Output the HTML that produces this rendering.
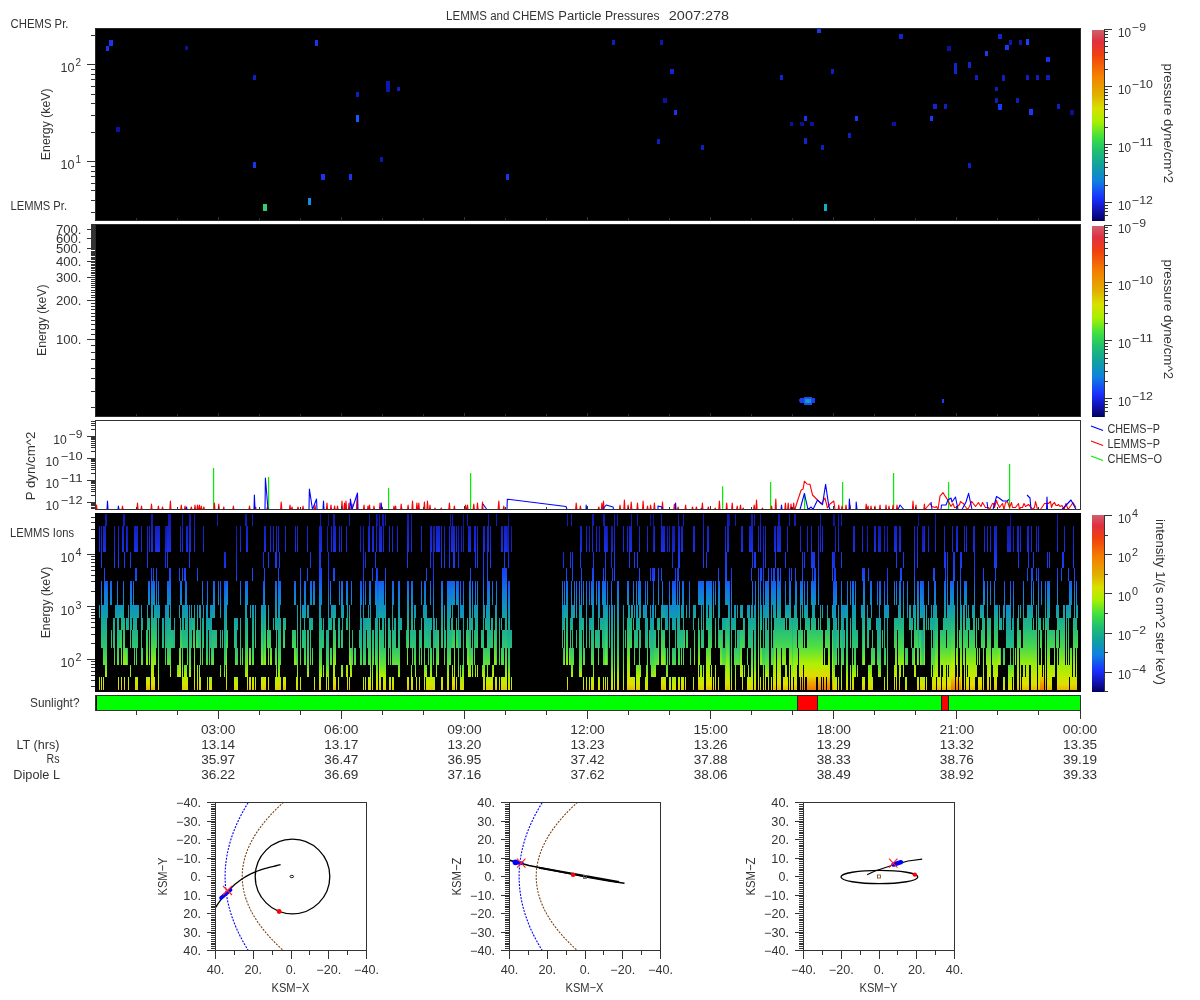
<!DOCTYPE html>
<html><head><meta charset="utf-8"><title>LEMMS and CHEMS Particle Pressures 2007:278</title>
<style>html,body{margin:0;padding:0;background:#fff;}body{width:1200px;height:1000px;overflow:hidden;font-family:"Liberation Sans", sans-serif;}svg{display:block;will-change:transform;}</style>
</head><body>
<svg width="1200" height="1000" viewBox="0 0 1200 1000" font-family='"Liberation Sans", sans-serif'><defs><linearGradient id="cmap" x1="0" y1="0" x2="0" y2="1"><stop offset="0.0" stop-color="#d0606c"/><stop offset="0.06" stop-color="#e03040"/><stop offset="0.13" stop-color="#f04010"/><stop offset="0.24" stop-color="#f58000"/><stop offset="0.34" stop-color="#e0b000"/><stop offset="0.41" stop-color="#d8e000"/><stop offset="0.48" stop-color="#a8f000"/><stop offset="0.56" stop-color="#40e040"/><stop offset="0.63" stop-color="#20c070"/><stop offset="0.71" stop-color="#10a0a0"/><stop offset="0.79" stop-color="#1080e0"/><stop offset="0.88" stop-color="#1a30ff"/><stop offset="0.95" stop-color="#1010a8"/><stop offset="1.0" stop-color="#000060"/></linearGradient><linearGradient id="gc" gradientUnits="userSpaceOnUse" x1="0" y1="513" x2="0" y2="691"><stop offset="0.000" stop-color="#080a80"/><stop offset="0.073" stop-color="#1216a8"/><stop offset="0.219" stop-color="#1728d4"/><stop offset="0.348" stop-color="#1a38f8"/><stop offset="0.433" stop-color="#1464e9"/><stop offset="0.517" stop-color="#1088d2"/><stop offset="0.590" stop-color="#109caf"/><stop offset="0.657" stop-color="#17aa99"/><stop offset="0.753" stop-color="#25bc7e"/><stop offset="0.848" stop-color="#4adb48"/><stop offset="0.916" stop-color="#98ec10"/><stop offset="0.961" stop-color="#c5e900"/><stop offset="0.994" stop-color="#e1d900"/></linearGradient><linearGradient id="gn" gradientUnits="userSpaceOnUse" x1="0" y1="513" x2="0" y2="691"><stop offset="0.000" stop-color="#1013a0"/><stop offset="0.073" stop-color="#151fbf"/><stop offset="0.219" stop-color="#1931e9"/><stop offset="0.348" stop-color="#1848f3"/><stop offset="0.433" stop-color="#1274e4"/><stop offset="0.517" stop-color="#1090c4"/><stop offset="0.590" stop-color="#13a4a2"/><stop offset="0.657" stop-color="#1db28d"/><stop offset="0.753" stop-color="#2ec570"/><stop offset="0.848" stop-color="#5ce238"/><stop offset="0.916" stop-color="#b0f000"/><stop offset="0.961" stop-color="#d2e500"/><stop offset="0.994" stop-color="#e3cb00"/></linearGradient><linearGradient id="gw" gradientUnits="userSpaceOnUse" x1="0" y1="513" x2="0" y2="691"><stop offset="0.000" stop-color="#1013a0"/><stop offset="0.073" stop-color="#151fbf"/><stop offset="0.219" stop-color="#1931e9"/><stop offset="0.348" stop-color="#1848f3"/><stop offset="0.433" stop-color="#1178e3"/><stop offset="0.517" stop-color="#1094bd"/><stop offset="0.590" stop-color="#19ac96"/><stop offset="0.657" stop-color="#26be7b"/><stop offset="0.753" stop-color="#47d94c"/><stop offset="0.848" stop-color="#98ec10"/><stop offset="0.916" stop-color="#c5e900"/><stop offset="0.961" stop-color="#e0e000"/><stop offset="0.994" stop-color="#e7b700"/></linearGradient><linearGradient id="gh" gradientUnits="userSpaceOnUse" x1="0" y1="513" x2="0" y2="691"><stop offset="0.000" stop-color="#1013a0"/><stop offset="0.073" stop-color="#151fbf"/><stop offset="0.219" stop-color="#1931e9"/><stop offset="0.348" stop-color="#1848f3"/><stop offset="0.433" stop-color="#1178e3"/><stop offset="0.517" stop-color="#1094bd"/><stop offset="0.590" stop-color="#19ac96"/><stop offset="0.657" stop-color="#2bc274"/><stop offset="0.753" stop-color="#50e040"/><stop offset="0.848" stop-color="#b0f000"/><stop offset="0.916" stop-color="#e1d900"/><stop offset="0.961" stop-color="#ed9d00"/><stop offset="0.994" stop-color="#f47403"/></linearGradient></defs><text x="446.09999999999997" y="20" font-size="12.5" text-anchor="start" fill="#333" textLength="108.1" lengthAdjust="spacingAndGlyphs" xml:space="preserve">LEMMS and CHEMS</text><text x="558.3" y="20" font-size="12.5" text-anchor="start" fill="#333" textLength="43.3" lengthAdjust="spacingAndGlyphs" xml:space="preserve">Particle</text><text x="605.0" y="20" font-size="12.5" text-anchor="start" fill="#333" textLength="54.7" lengthAdjust="spacingAndGlyphs" xml:space="preserve">Pressures</text><text x="668.8" y="20" font-size="12.5" text-anchor="start" fill="#333" textLength="60.3" lengthAdjust="spacingAndGlyphs" xml:space="preserve">2007:278</text><rect x="95" y="28" width="986" height="193" fill="#000"/><rect x="95.5" y="28.5" width="985" height="192" fill="none" stroke="#2a2a2a" stroke-width="1"/><rect x="109" y="40" width="4" height="6" fill="#1a34f0"/><rect x="106" y="46" width="3" height="5" fill="#1a34f0"/><rect x="185" y="46" width="3" height="4" fill="#0a12a0"/><rect x="315" y="40" width="3" height="6" fill="#1a34f0"/><rect x="253" y="75" width="3" height="5" fill="#0e20c0"/><rect x="116" y="127" width="4" height="5" fill="#0a12a0"/><rect x="253" y="162" width="3" height="6" fill="#1a34f0"/><rect x="321" y="174" width="4" height="6" fill="#1a34f0"/><rect x="308" y="198" width="3" height="7" fill="#0c90e0"/><rect x="263" y="204" width="4" height="7" fill="#30d070"/><rect x="356" y="92" width="3" height="5" fill="#0e20c0"/><rect x="386" y="81" width="4" height="11" fill="#0a18b0"/><rect x="397" y="87" width="3" height="4" fill="#0e20c0"/><rect x="356" y="115" width="3" height="7" fill="#1a58ff"/><rect x="380" y="157" width="3" height="5" fill="#0a18b0"/><rect x="349" y="174" width="3" height="6" fill="#1a34f0"/><rect x="506" y="174" width="3" height="6" fill="#1a34f0"/><rect x="612" y="40" width="3" height="5" fill="#0e20c0"/><rect x="660" y="40" width="3" height="5" fill="#0a18b0"/><rect x="817" y="29" width="4" height="4" fill="#1a34f0"/><rect x="670" y="69" width="4" height="5" fill="#1224d0"/><rect x="780" y="75" width="3" height="5" fill="#1224d0"/><rect x="831" y="69" width="3" height="5" fill="#0e20c0"/><rect x="663" y="98" width="4" height="5" fill="#0a12a0"/><rect x="674" y="110" width="3" height="5" fill="#1a34f0"/><rect x="804" y="116" width="3" height="5" fill="#1a34f0"/><rect x="790" y="122" width="3" height="4" fill="#0a12a0"/><rect x="800" y="122" width="4" height="4" fill="#0a1090"/><rect x="810" y="122" width="4" height="4" fill="#0a12a0"/><rect x="657" y="139" width="3" height="5" fill="#0e20c0"/><rect x="804" y="138" width="3" height="6" fill="#1224d0"/><rect x="701" y="145" width="3" height="5" fill="#0e20c0"/><rect x="821" y="145" width="3" height="5" fill="#0e20c0"/><rect x="824" y="204" width="3" height="7" fill="#10b0c0"/><rect x="899" y="34" width="4" height="5" fill="#1224d0"/><rect x="998" y="34" width="4" height="5" fill="#1224d0"/><rect x="1009" y="40" width="3" height="5" fill="#0a18b0"/><rect x="1019" y="40" width="3" height="5" fill="#0a18b0"/><rect x="1026" y="39" width="3" height="6" fill="#1a44ff"/><rect x="1005" y="45" width="4" height="5" fill="#1a38f8"/><rect x="947" y="46" width="4" height="5" fill="#0a12a0"/><rect x="985" y="51" width="3" height="5" fill="#1a38f8"/><rect x="1046" y="57" width="4" height="5" fill="#1630f0"/><rect x="954" y="63" width="3" height="11" fill="#1224d0"/><rect x="968" y="62" width="3" height="6" fill="#1224d0"/><rect x="975" y="75" width="3" height="5" fill="#0e20c0"/><rect x="1002" y="75" width="3" height="6" fill="#0e20c0"/><rect x="1026" y="75" width="3" height="5" fill="#0e20c0"/><rect x="1036" y="75" width="3" height="5" fill="#0e20c0"/><rect x="1046" y="75" width="4" height="5" fill="#0e1eb8"/><rect x="995" y="87" width="3" height="4" fill="#0e1eb8"/><rect x="995" y="98" width="3" height="5" fill="#0e1eb8"/><rect x="1016" y="98" width="3" height="5" fill="#0e1eb8"/><rect x="933" y="104" width="4" height="5" fill="#1224d0"/><rect x="944" y="104" width="3" height="5" fill="#0e20c0"/><rect x="998" y="104" width="4" height="6" fill="#1a38f8"/><rect x="1057" y="104" width="3" height="5" fill="#0e20c0"/><rect x="1029" y="109" width="4" height="6" fill="#1a38f8"/><rect x="1070" y="110" width="4" height="5" fill="#0a1090"/><rect x="855" y="116" width="3" height="5" fill="#1a38f8"/><rect x="930" y="116" width="3" height="5" fill="#1a38f8"/><rect x="892" y="122" width="4" height="4" fill="#0a12a0"/><rect x="848" y="133" width="3" height="5" fill="#0e20c0"/><rect x="968" y="163" width="3" height="5" fill="#0e20c0"/><rect x="91" y="212" width="4" height="1" fill="#333"/><rect x="91" y="200" width="4" height="1" fill="#333"/><rect x="91" y="190" width="4" height="1" fill="#333"/><rect x="91" y="183" width="4" height="1" fill="#333"/><rect x="91" y="176" width="4" height="1" fill="#333"/><rect x="91" y="171" width="4" height="1" fill="#333"/><rect x="91" y="166" width="4" height="1" fill="#333"/><rect x="87" y="161" width="8" height="1" fill="#333"/><rect x="91" y="132" width="4" height="1" fill="#333"/><rect x="91" y="115" width="4" height="1" fill="#333"/><rect x="91" y="103" width="4" height="1" fill="#333"/><rect x="91" y="94" width="4" height="1" fill="#333"/><rect x="91" y="86" width="4" height="1" fill="#333"/><rect x="91" y="79" width="4" height="1" fill="#333"/><rect x="91" y="74" width="4" height="1" fill="#333"/><rect x="91" y="69" width="4" height="1" fill="#333"/><rect x="87" y="64" width="8" height="1" fill="#333"/><rect x="91" y="35" width="4" height="1" fill="#333"/><rect x="136" y="218" width="1" height="2" fill="#333"/><rect x="177" y="218" width="1" height="2" fill="#333"/><rect x="218" y="217" width="1" height="3" fill="#333"/><rect x="259" y="218" width="1" height="2" fill="#333"/><rect x="300" y="218" width="1" height="2" fill="#333"/><rect x="341" y="217" width="1" height="3" fill="#333"/><rect x="382" y="218" width="1" height="2" fill="#333"/><rect x="423" y="218" width="1" height="2" fill="#333"/><rect x="464" y="217" width="1" height="3" fill="#333"/><rect x="505" y="218" width="1" height="2" fill="#333"/><rect x="546" y="218" width="1" height="2" fill="#333"/><rect x="587" y="217" width="1" height="3" fill="#333"/><rect x="628" y="218" width="1" height="2" fill="#333"/><rect x="669" y="218" width="1" height="2" fill="#333"/><rect x="710" y="217" width="1" height="3" fill="#333"/><rect x="751" y="218" width="1" height="2" fill="#333"/><rect x="792" y="218" width="1" height="2" fill="#333"/><rect x="833" y="217" width="1" height="3" fill="#333"/><rect x="874" y="218" width="1" height="2" fill="#333"/><rect x="915" y="218" width="1" height="2" fill="#333"/><rect x="956" y="217" width="1" height="3" fill="#333"/><rect x="997" y="218" width="1" height="2" fill="#333"/><rect x="1038" y="218" width="1" height="2" fill="#333"/><text x="60.5" y="72" font-size="12.5" text-anchor="start" fill="#333" textLength="14" lengthAdjust="spacingAndGlyphs" xml:space="preserve">10</text><text x="75.5" y="66" font-size="11" text-anchor="start" fill="#333" textLength="5.5" lengthAdjust="spacingAndGlyphs" xml:space="preserve">2</text><text x="60.5" y="168.5" font-size="12.5" text-anchor="start" fill="#333" textLength="14" lengthAdjust="spacingAndGlyphs" xml:space="preserve">10</text><text x="75.5" y="162.5" font-size="11" text-anchor="start" fill="#333" textLength="5.5" lengthAdjust="spacingAndGlyphs" xml:space="preserve">1</text><text x="10.5" y="28" font-size="12.5" text-anchor="start" fill="#333" textLength="58" lengthAdjust="spacingAndGlyphs" xml:space="preserve">CHEMS Pr.</text><text transform="translate(50,124.3) rotate(-90)" font-size="12.5" text-anchor="middle" fill="#333" textLength="71.7" lengthAdjust="spacingAndGlyphs">Energy (keV)</text><rect x="1092" y="30" width="12" height="191" fill="url(#cmap)"/><rect x="1104" y="30" width="1" height="191" fill="#333"/><rect x="1104" y="215" width="4" height="1" fill="#333"/><rect x="1104" y="211" width="4" height="1" fill="#333"/><rect x="1104" y="208" width="4" height="1" fill="#333"/><rect x="1104" y="205" width="4" height="1" fill="#333"/><rect x="1104" y="202" width="8" height="1" fill="#333"/><rect x="1104" y="185" width="4" height="1" fill="#333"/><rect x="1104" y="175" width="4" height="1" fill="#333"/><rect x="1104" y="167" width="4" height="1" fill="#333"/><rect x="1104" y="162" width="4" height="1" fill="#333"/><rect x="1104" y="157" width="4" height="1" fill="#333"/><rect x="1104" y="153" width="4" height="1" fill="#333"/><rect x="1104" y="150" width="4" height="1" fill="#333"/><rect x="1104" y="147" width="4" height="1" fill="#333"/><rect x="1104" y="144" width="8" height="1" fill="#333"/><rect x="1104" y="127" width="4" height="1" fill="#333"/><rect x="1104" y="117" width="4" height="1" fill="#333"/><rect x="1104" y="109" width="4" height="1" fill="#333"/><rect x="1104" y="104" width="4" height="1" fill="#333"/><rect x="1104" y="99" width="4" height="1" fill="#333"/><rect x="1104" y="95" width="4" height="1" fill="#333"/><rect x="1104" y="92" width="4" height="1" fill="#333"/><rect x="1104" y="89" width="4" height="1" fill="#333"/><rect x="1104" y="86" width="8" height="1" fill="#333"/><rect x="1104" y="69" width="4" height="1" fill="#333"/><rect x="1104" y="59" width="4" height="1" fill="#333"/><rect x="1104" y="52" width="4" height="1" fill="#333"/><rect x="1104" y="46" width="4" height="1" fill="#333"/><rect x="1104" y="41" width="4" height="1" fill="#333"/><rect x="1104" y="37" width="4" height="1" fill="#333"/><rect x="1104" y="34" width="4" height="1" fill="#333"/><rect x="1104" y="31" width="4" height="1" fill="#333"/><rect x="1104" y="29" width="8" height="1" fill="#333"/><text x="1118" y="36.5" font-size="12.5" text-anchor="start" fill="#333" textLength="13" lengthAdjust="spacingAndGlyphs" xml:space="preserve">10</text><text x="1132" y="30.5" font-size="11.5" text-anchor="start" fill="#333" textLength="14" lengthAdjust="spacingAndGlyphs" xml:space="preserve">−9</text><text x="1118" y="94.3" font-size="12.5" text-anchor="start" fill="#333" textLength="13" lengthAdjust="spacingAndGlyphs" xml:space="preserve">10</text><text x="1132" y="88.3" font-size="11.5" text-anchor="start" fill="#333" textLength="21" lengthAdjust="spacingAndGlyphs" xml:space="preserve">−10</text><text x="1118" y="152.1" font-size="12.5" text-anchor="start" fill="#333" textLength="13" lengthAdjust="spacingAndGlyphs" xml:space="preserve">10</text><text x="1132" y="146.1" font-size="11.5" text-anchor="start" fill="#333" textLength="21" lengthAdjust="spacingAndGlyphs" xml:space="preserve">−11</text><text x="1118" y="209.9" font-size="12.5" text-anchor="start" fill="#333" textLength="13" lengthAdjust="spacingAndGlyphs" xml:space="preserve">10</text><text x="1132" y="203.9" font-size="11.5" text-anchor="start" fill="#333" textLength="21" lengthAdjust="spacingAndGlyphs" xml:space="preserve">−12</text><text transform="translate(1164,123.3) rotate(90)" font-size="12.5" text-anchor="middle" fill="#333" textLength="119.7" lengthAdjust="spacingAndGlyphs">pressure dyne/cm^2</text><rect x="95" y="224" width="986" height="193" fill="#000"/><rect x="95.5" y="224.5" width="985" height="192" fill="none" stroke="#2a2a2a" stroke-width="1"/><rect x="800" y="398" width="15" height="5" fill="#1a40f0"/><rect x="799" y="399" width="1" height="3" fill="#1530d0"/><rect x="804" y="397" width="8" height="8" fill="#1a50f0"/><rect x="805" y="399" width="6" height="4" fill="#1890d8"/><rect x="806" y="400" width="3" height="2" fill="#10a0c0"/><rect x="942" y="399" width="2" height="4" fill="#1a40ff"/><rect x="91" y="407" width="4" height="1" fill="#333"/><rect x="91" y="391" width="4" height="1" fill="#333"/><rect x="91" y="378" width="4" height="1" fill="#333"/><rect x="91" y="368" width="4" height="1" fill="#333"/><rect x="91" y="359" width="4" height="1" fill="#333"/><rect x="91" y="352" width="4" height="1" fill="#333"/><rect x="91" y="345" width="4" height="1" fill="#333"/><rect x="87" y="339" width="8" height="1" fill="#333"/><rect x="91" y="334" width="4" height="1" fill="#333"/><rect x="91" y="329" width="4" height="1" fill="#333"/><rect x="91" y="324" width="4" height="1" fill="#333"/><rect x="91" y="320" width="4" height="1" fill="#333"/><rect x="91" y="316" width="4" height="1" fill="#333"/><rect x="91" y="313" width="4" height="1" fill="#333"/><rect x="91" y="309" width="4" height="1" fill="#333"/><rect x="91" y="306" width="4" height="1" fill="#333"/><rect x="91" y="303" width="4" height="1" fill="#333"/><rect x="87" y="300" width="8" height="1" fill="#333"/><rect x="91" y="297" width="4" height="1" fill="#333"/><rect x="91" y="295" width="4" height="1" fill="#333"/><rect x="91" y="292" width="4" height="1" fill="#333"/><rect x="91" y="290" width="4" height="1" fill="#333"/><rect x="91" y="287" width="4" height="1" fill="#333"/><rect x="91" y="285" width="4" height="1" fill="#333"/><rect x="91" y="283" width="4" height="1" fill="#333"/><rect x="91" y="281" width="4" height="1" fill="#333"/><rect x="91" y="279" width="4" height="1" fill="#333"/><rect x="87" y="277" width="8" height="1" fill="#333"/><rect x="91" y="275" width="4" height="1" fill="#333"/><rect x="91" y="273" width="4" height="1" fill="#333"/><rect x="91" y="272" width="4" height="1" fill="#333"/><rect x="91" y="270" width="4" height="1" fill="#333"/><rect x="91" y="268" width="4" height="1" fill="#333"/><rect x="91" y="267" width="4" height="1" fill="#333"/><rect x="91" y="265" width="4" height="1" fill="#333"/><rect x="91" y="264" width="4" height="1" fill="#333"/><rect x="91" y="262" width="4" height="1" fill="#333"/><rect x="87" y="261" width="8" height="1" fill="#333"/><rect x="91" y="259" width="4" height="1" fill="#333"/><rect x="91" y="258" width="4" height="1" fill="#333"/><rect x="91" y="257" width="4" height="1" fill="#333"/><rect x="91" y="255" width="4" height="1" fill="#333"/><rect x="91" y="254" width="4" height="1" fill="#333"/><rect x="91" y="253" width="4" height="1" fill="#333"/><rect x="91" y="252" width="4" height="1" fill="#333"/><rect x="91" y="251" width="4" height="1" fill="#333"/><rect x="91" y="249" width="4" height="1" fill="#333"/><rect x="87" y="248" width="8" height="1" fill="#333"/><rect x="91" y="247" width="4" height="1" fill="#333"/><rect x="91" y="246" width="4" height="1" fill="#333"/><rect x="91" y="245" width="4" height="1" fill="#333"/><rect x="91" y="244" width="4" height="1" fill="#333"/><rect x="91" y="243" width="4" height="1" fill="#333"/><rect x="91" y="242" width="4" height="1" fill="#333"/><rect x="91" y="241" width="4" height="1" fill="#333"/><rect x="91" y="240" width="4" height="1" fill="#333"/><rect x="91" y="239" width="4" height="1" fill="#333"/><rect x="87" y="238" width="8" height="1" fill="#333"/><rect x="91" y="237" width="4" height="1" fill="#333"/><rect x="91" y="236" width="4" height="1" fill="#333"/><rect x="91" y="235" width="4" height="1" fill="#333"/><rect x="91" y="234" width="4" height="1" fill="#333"/><rect x="91" y="233" width="4" height="1" fill="#333"/><rect x="91" y="233" width="4" height="1" fill="#333"/><rect x="91" y="232" width="4" height="1" fill="#333"/><rect x="91" y="231" width="4" height="1" fill="#333"/><rect x="91" y="230" width="4" height="1" fill="#333"/><rect x="87" y="229" width="8" height="1" fill="#333"/><rect x="91" y="228" width="4" height="1" fill="#333"/><rect x="91" y="228" width="4" height="1" fill="#333"/><rect x="91" y="227" width="4" height="1" fill="#333"/><rect x="91" y="226" width="4" height="1" fill="#333"/><rect x="91" y="225" width="4" height="1" fill="#333"/><rect x="91" y="225" width="4" height="1" fill="#333"/><rect x="91" y="224" width="4" height="1" fill="#333"/><text x="81.5" y="344.14000000000004" font-size="12" text-anchor="end" fill="#333" textLength="25.5" lengthAdjust="spacingAndGlyphs" xml:space="preserve">100.</text><text x="81.5" y="304.99706966381257" font-size="12" text-anchor="end" fill="#333" textLength="25.5" lengthAdjust="spacingAndGlyphs" xml:space="preserve">200.</text><text x="81.5" y="282.0999232488023" font-size="12" text-anchor="end" fill="#333" textLength="25.5" lengthAdjust="spacingAndGlyphs" xml:space="preserve">300.</text><text x="81.5" y="265.8541393276251" font-size="12" text-anchor="end" fill="#333" textLength="25.5" lengthAdjust="spacingAndGlyphs" xml:space="preserve">400.</text><text x="81.5" y="253.25293033618755" font-size="12" text-anchor="end" fill="#333" textLength="25.5" lengthAdjust="spacingAndGlyphs" xml:space="preserve">500.</text><text x="81.5" y="242.9569929126149" font-size="12" text-anchor="end" fill="#333" textLength="25.5" lengthAdjust="spacingAndGlyphs" xml:space="preserve">600.</text><text x="81.5" y="234.25190185694623" font-size="12" text-anchor="end" fill="#333" textLength="25.5" lengthAdjust="spacingAndGlyphs" xml:space="preserve">700.</text><rect x="136" y="414" width="1" height="2" fill="#333"/><rect x="177" y="414" width="1" height="2" fill="#333"/><rect x="218" y="413" width="1" height="3" fill="#333"/><rect x="259" y="414" width="1" height="2" fill="#333"/><rect x="300" y="414" width="1" height="2" fill="#333"/><rect x="341" y="413" width="1" height="3" fill="#333"/><rect x="382" y="414" width="1" height="2" fill="#333"/><rect x="423" y="414" width="1" height="2" fill="#333"/><rect x="464" y="413" width="1" height="3" fill="#333"/><rect x="505" y="414" width="1" height="2" fill="#333"/><rect x="546" y="414" width="1" height="2" fill="#333"/><rect x="587" y="413" width="1" height="3" fill="#333"/><rect x="628" y="414" width="1" height="2" fill="#333"/><rect x="669" y="414" width="1" height="2" fill="#333"/><rect x="710" y="413" width="1" height="3" fill="#333"/><rect x="751" y="414" width="1" height="2" fill="#333"/><rect x="792" y="414" width="1" height="2" fill="#333"/><rect x="833" y="413" width="1" height="3" fill="#333"/><rect x="874" y="414" width="1" height="2" fill="#333"/><rect x="915" y="414" width="1" height="2" fill="#333"/><rect x="956" y="413" width="1" height="3" fill="#333"/><rect x="997" y="414" width="1" height="2" fill="#333"/><rect x="1038" y="414" width="1" height="2" fill="#333"/><text x="10.5" y="209.5" font-size="12.5" text-anchor="start" fill="#333" textLength="56.5" lengthAdjust="spacingAndGlyphs" xml:space="preserve">LEMMS Pr.</text><text transform="translate(46,320.25) rotate(-90)" font-size="12.5" text-anchor="middle" fill="#333" textLength="71.5" lengthAdjust="spacingAndGlyphs">Energy (keV)</text><rect x="1092" y="226" width="12" height="191" fill="url(#cmap)"/><rect x="1104" y="226" width="1" height="191" fill="#333"/><rect x="1104" y="411" width="4" height="1" fill="#333"/><rect x="1104" y="407" width="4" height="1" fill="#333"/><rect x="1104" y="404" width="4" height="1" fill="#333"/><rect x="1104" y="401" width="4" height="1" fill="#333"/><rect x="1104" y="398" width="8" height="1" fill="#333"/><rect x="1104" y="381" width="4" height="1" fill="#333"/><rect x="1104" y="371" width="4" height="1" fill="#333"/><rect x="1104" y="363" width="4" height="1" fill="#333"/><rect x="1104" y="358" width="4" height="1" fill="#333"/><rect x="1104" y="353" width="4" height="1" fill="#333"/><rect x="1104" y="349" width="4" height="1" fill="#333"/><rect x="1104" y="346" width="4" height="1" fill="#333"/><rect x="1104" y="343" width="4" height="1" fill="#333"/><rect x="1104" y="340" width="8" height="1" fill="#333"/><rect x="1104" y="323" width="4" height="1" fill="#333"/><rect x="1104" y="313" width="4" height="1" fill="#333"/><rect x="1104" y="305" width="4" height="1" fill="#333"/><rect x="1104" y="300" width="4" height="1" fill="#333"/><rect x="1104" y="295" width="4" height="1" fill="#333"/><rect x="1104" y="291" width="4" height="1" fill="#333"/><rect x="1104" y="288" width="4" height="1" fill="#333"/><rect x="1104" y="285" width="4" height="1" fill="#333"/><rect x="1104" y="282" width="8" height="1" fill="#333"/><rect x="1104" y="265" width="4" height="1" fill="#333"/><rect x="1104" y="255" width="4" height="1" fill="#333"/><rect x="1104" y="248" width="4" height="1" fill="#333"/><rect x="1104" y="242" width="4" height="1" fill="#333"/><rect x="1104" y="237" width="4" height="1" fill="#333"/><rect x="1104" y="233" width="4" height="1" fill="#333"/><rect x="1104" y="230" width="4" height="1" fill="#333"/><rect x="1104" y="227" width="4" height="1" fill="#333"/><rect x="1104" y="225" width="8" height="1" fill="#333"/><text x="1118" y="232.5" font-size="12.5" text-anchor="start" fill="#333" textLength="13" lengthAdjust="spacingAndGlyphs" xml:space="preserve">10</text><text x="1132" y="226.5" font-size="11.5" text-anchor="start" fill="#333" textLength="14" lengthAdjust="spacingAndGlyphs" xml:space="preserve">−9</text><text x="1118" y="290.3" font-size="12.5" text-anchor="start" fill="#333" textLength="13" lengthAdjust="spacingAndGlyphs" xml:space="preserve">10</text><text x="1132" y="284.3" font-size="11.5" text-anchor="start" fill="#333" textLength="21" lengthAdjust="spacingAndGlyphs" xml:space="preserve">−10</text><text x="1118" y="348.1" font-size="12.5" text-anchor="start" fill="#333" textLength="13" lengthAdjust="spacingAndGlyphs" xml:space="preserve">10</text><text x="1132" y="342.1" font-size="11.5" text-anchor="start" fill="#333" textLength="21" lengthAdjust="spacingAndGlyphs" xml:space="preserve">−11</text><text x="1118" y="405.9" font-size="12.5" text-anchor="start" fill="#333" textLength="13" lengthAdjust="spacingAndGlyphs" xml:space="preserve">10</text><text x="1132" y="399.9" font-size="11.5" text-anchor="start" fill="#333" textLength="21" lengthAdjust="spacingAndGlyphs" xml:space="preserve">−12</text><text transform="translate(1164,319.3) rotate(90)" font-size="12.5" text-anchor="middle" fill="#333" textLength="119.7" lengthAdjust="spacingAndGlyphs">pressure dyne/cm^2</text><rect x="95.5" y="420.5" width="985" height="89" fill="#fff" stroke="#333" stroke-width="1"/><rect x="213" y="468" width="1.2" height="41.5" fill="#00ee00"/><rect x="268" y="477" width="1.2" height="32.5" fill="#00ee00"/><rect x="388" y="488" width="1.2" height="21.5" fill="#00ee00"/><rect x="470" y="473" width="1.2" height="36.5" fill="#00ee00"/><rect x="722" y="486.3" width="1.2" height="23.19999999999999" fill="#00ee00"/><rect x="770" y="482" width="1.2" height="27.5" fill="#00ee00"/><rect x="804" y="493.3" width="1.2" height="16.19999999999999" fill="#00ee00"/><rect x="842" y="482" width="1.2" height="27.5" fill="#00ee00"/><rect x="893" y="473" width="1.2" height="36.5" fill="#00ee00"/><rect x="948" y="482" width="1.2" height="27.5" fill="#00ee00"/><rect x="1009" y="464" width="1.2" height="45.5" fill="#00ee00"/><path d="M95.9 509.5 L96.5 505.0 L97.1 509.5 L121.9 509.5 L122.5 506.0 L123.1 509.5 L136.9 509.5 L137.5 503.0 L138.1 509.5 L140.9 509.5 L141.5 506.0 L142.1 509.5 L150.9 509.5 L151.5 504.0 L152.1 509.5 L157.8 509.5 L158.4 506.0 L159.0 509.5 L161.9 509.5 L162.5 507.0 L163.1 509.5 L169.8 509.5 L170.4 501.0 L171.0 509.5 L180.7 509.5 L181.3 505.0 L181.9 509.5 L184.4 509.5 L185.0 506.0 L185.6 509.5 L190.7 509.5 L191.3 507.0 L191.9 509.5 L194.4 509.5 L195.0 505.0 L195.6 509.5 L196.9 509.5 L197.5 505.0 L198.1 509.5 L198.8 509.5 L199.4 505.0 L200.0 509.5 L200.7 509.5 L201.3 506.0 L201.9 509.5 L203.2 509.5 L203.8 507.0 L204.4 509.5 L213.8 509.5 L214.4 503.0 L215.0 509.5 L218.2 509.5 L218.8 504.0 L219.3 509.5 L223.2 509.5 L223.8 507.0 L224.3 509.5 L232.8 509.5 L233.4 506.0 L234.0 509.5 L248.9 509.5 L249.5 506.0 L250.1 509.5 L255.0 509.5 L255.6 507.0 L256.2 509.5 L266.9 509.5 L267.5 507.0 L268.1 509.5 L280.6 509.5 L281.2 502.0 L281.9 509.5 L289.4 509.5 L290.0 505.0 L290.6 509.5 L291.4 509.5 L292.0 507.0 L292.6 509.5 L297.4 509.5 L298.0 507.0 L298.6 509.5 L302.4 509.5 L303.0 506.0 L303.6 509.5 L314.4 509.5 L315.0 505.0 L315.6 509.5 L326.4 509.5 L327.0 503.0 L327.6 509.5 L330.4 509.5 L331.0 505.0 L331.6 509.5 L334.0 509.5 L334.6 506.0 L335.2 509.5 L336.9 509.5 L337.5 506.0 L338.1 509.5 L341.4 509.5 L342.0 501.0 L342.6 509.5 L343.9 509.5 L344.5 503.0 L345.1 509.5 L345.4 509.5 L346.0 501.0 L346.6 509.5 L348.4 509.5 L349.0 503.0 L349.6 509.5 L351.4 509.5 L352.0 504.0 L352.6 509.5 L356.4 509.5 L357.0 497.0 L357.6 509.5 L363.4 509.5 L364.0 505.0 L364.6 509.5 L367.4 509.5 L368.0 506.0 L368.6 509.5 L368.9 509.5 L369.5 505.0 L370.1 509.5 L373.4 509.5 L374.0 506.0 L374.6 509.5 L379.4 509.5 L380.0 503.0 L380.6 509.5 L393.4 509.5 L394.0 506.0 L394.6 509.5 L395.0 509.5 L395.6 506.0 L396.2 509.5 L400.6 509.5 L401.2 504.0 L401.9 509.5 L407.5 509.5 L408.1 505.0 L408.7 509.5 L411.9 509.5 L412.5 501.0 L413.1 509.5 L416.3 509.5 L416.9 503.0 L417.5 509.5 L418.1 509.5 L418.8 503.0 L419.4 509.5 L423.8 509.5 L424.4 502.0 L425.0 509.5 L426.9 509.5 L427.5 501.0 L428.1 509.5 L429.4 509.5 L430.0 505.0 L430.6 509.5 L434.4 509.5 L435.0 508.0 L435.6 509.5 L440.6 509.5 L441.2 508.0 L441.9 509.5 L448.8 509.5 L449.4 503.0 L450.0 509.5 L453.8 509.5 L454.4 506.0 L455.0 509.5 L465.0 509.5 L465.6 505.0 L466.2 509.5 L466.9 509.5 L467.5 505.0 L468.1 509.5 L473.1 509.5 L473.8 504.0 L474.4 509.5 L476.9 509.5 L477.5 503.0 L478.1 509.5 L481.9 509.5 L482.5 502.0 L483.1 509.5 L498.1 509.5 L498.8 501.0 L499.4 509.5 L503.1 509.5 L503.8 506.0 L504.4 509.5 L575.6 509.5 L576.2 503.0 L576.9 509.5 L579.8 509.5 L580.4 506.0 L581.0 509.5 L598.1 509.5 L598.8 507.0 L599.4 509.5 L601.3 509.5 L601.9 503.0 L602.5 509.5 L602.9 509.5 L603.5 501.0 L604.1 509.5 L619.4 509.5 L620.0 505.0 L620.6 509.5 L623.8 509.5 L624.4 500.0 L625.0 509.5 L627.5 509.5 L628.1 505.0 L628.7 509.5 L630.6 509.5 L631.2 502.0 L631.9 509.5 L636.9 509.5 L637.5 503.0 L638.1 509.5 L642.5 509.5 L643.1 501.0 L643.7 509.5 L646.9 509.5 L647.5 506.0 L648.1 509.5 L650.0 509.5 L650.6 505.0 L651.2 509.5 L653.8 509.5 L654.4 503.0 L655.0 509.5 L661.9 509.5 L662.5 502.0 L663.1 509.5 L673.8 509.5 L674.4 504.0 L675.0 509.5 L677.5 509.5 L678.1 507.0 L678.7 509.5 L685.0 509.5 L685.6 505.0 L686.2 509.5 L691.9 509.5 L692.5 507.0 L693.1 509.5 L695.8 509.5 L696.4 507.0 L697.0 509.5 L701.8 509.5 L702.4 503.0 L703.0 509.5 L707.7 509.5 L708.3 507.0 L708.9 509.5 L714.6 509.5 L715.2 508.0 L715.8 509.5 L718.8 509.5 L719.4 501.0 L720.0 509.5 L726.1 509.5 L726.7 503.0 L727.3 509.5 L731.6 509.5 L732.2 503.0 L732.8 509.5 L736.6 509.5 L737.2 506.0 L737.8 509.5 L739.9 509.5 L740.5 505.0 L741.1 509.5 L742.6 509.5 L743.2 508.0 L743.8 509.5 L753.6 509.5 L754.2 505.0 L754.8 509.5 L755.9 509.5 L756.5 500.0 L757.1 509.5 L761.9 509.5 L762.5 508.0 L763.1 509.5 L771.0 509.5 L771.6 506.0 L772.2 509.5 L775.2 509.5 L775.8 499.0 L776.4 509.5 L784.8 509.5 L785.4 503.0 L786.0 509.5 L787.6 509.5 L788.2 503.0 L788.8 509.5 L790.4 509.5 L791.0 504.0 L791.6 509.5 L793.1 509.5 L793.7 503.0 L794.3 509.5 L795.0 509.5 L796.2 505.0 L798.8 497.0 L801.2 490.0 L803.1 489.0 L804.4 481.2 L806.9 484.0 L810.0 484.4 L812.5 495.0 L817.5 500.0 L821.2 504.0 L825.0 498.0 L827.5 508.0 L830.0 504.0 L833.8 501.0 L835.0 509.5 L838.1 509.5 L838.8 505.0 L839.4 509.5 L841.4 509.5 L842.0 506.0 L842.6 509.5 L845.4 509.5 L846.0 505.0 L846.6 509.5 L849.4 509.5 L850.0 505.0 L850.6 509.5 L865.6 509.5 L866.2 504.0 L866.9 509.5 L867.4 509.5 L868.0 506.0 L868.6 509.5 L870.4 509.5 L871.0 506.0 L871.6 509.5 L874.4 509.5 L875.0 506.0 L875.6 509.5 L879.4 509.5 L880.0 505.0 L880.6 509.5 L885.4 509.5 L886.0 505.0 L886.6 509.5 L888.4 509.5 L889.0 506.0 L889.6 509.5 L892.4 509.5 L893.0 505.0 L893.6 509.5 L896.4 509.5 L897.0 505.0 L897.6 509.5 L912.4 509.5 L913.0 501.0 L913.6 509.5 L915.4 509.5 L916.0 505.0 L916.6 509.5 L923.8 509.5 L924.4 504.0 L925.0 509.5 L930.0 503.5 L932.0 506.5 L935.0 507.5 L936.5 506.5 L938.0 509.5 L940.0 496.2 L943.0 492.6 L944.0 494.2 L946.0 497.4 L948.0 500.5 L951.0 506.5 L953.0 503.5 L954.5 507.5 L956.5 507.5 L959.5 504.5 L960.5 501.5 L961.5 502.5 L963.5 503.5 L964.5 505.5 L967.5 509.5 L969.5 506.5 L971.5 501.5 L972.5 502.5 L975.5 506.5 L978.5 502.5 L979.5 504.5 L981.0 506.5 L982.5 502.5 L985.5 507.5 L988.5 507.5 L989.5 509.5 L990.5 507.5 L992.5 503.5 L993.5 503.5 L994.5 507.5 L996.5 500.5 L997.5 503.5 L999.5 507.5 L1002.5 503.5 L1004.0 509.5 L1005.5 502.5 L1007.5 501.5 L1009.5 507.5 L1011.5 502.5 L1012.5 507.5 L1015.5 507.5 L1018.5 503.5 L1019.5 509.5 L1020.5 507.5 L1022.5 507.5 L1024.0 503.5 L1025.5 506.5 L1028.5 504.5 L1030.5 506.5 L1032.5 509.5 L1034.5 507.5 L1035.5 501.5 L1037.5 509.5 L1040.5 509.5 L1042.5 506.5 L1044.5 503.5 L1046.5 503.5 L1048.5 503.5 L1050.5 501.5 L1051.5 507.5 L1052.5 504.5 L1054.5 502.5 L1056.0 505.5 L1057.5 505.5 L1058.5 504.5 L1060.0 506.5 L1062.0 505.5 L1064.0 509.5 L1066.0 503.5 L1068.0 509.5 L1071.0 505.5 L1073.0 502.5 L1076.0 507.5" fill="none" stroke="#ff0000" stroke-width="1.1" stroke-linejoin="round"/><path d="M107.0 509.5 L107.5 501.0 L108.0 509.5" fill="none" stroke="#0000ff" stroke-width="1.1" stroke-linejoin="round"/><path d="M118.0 509.5 L118.4 506.0 L119.0 509.5" fill="none" stroke="#0000ff" stroke-width="1.1" stroke-linejoin="round"/><path d="M186.0 509.5 L186.6 507.0 L187.0 509.5" fill="none" stroke="#0000ff" stroke-width="1.1" stroke-linejoin="round"/><path d="M254.0 509.5 L254.4 495.0 L255.0 509.5" fill="none" stroke="#0000ff" stroke-width="1.1" stroke-linejoin="round"/><path d="M265.0 509.5 L265.4 478.0 L268.0 509.5" fill="none" stroke="#0000ff" stroke-width="1.1" stroke-linejoin="round"/><path d="M309.0 509.5 L309.4 489.0 L312.5 509.5 L316.5 499.0 L317.0 509.5" fill="none" stroke="#0000ff" stroke-width="1.1" stroke-linejoin="round"/><path d="M323.0 509.5 L323.5 501.0 L324.0 509.5" fill="none" stroke="#0000ff" stroke-width="1.1" stroke-linejoin="round"/><path d="M350.0 509.5 L350.4 499.0 L352.0 509.5 L357.5 493.0 L358.0 509.5" fill="none" stroke="#0000ff" stroke-width="1.1" stroke-linejoin="round"/><path d="M381.0 509.5 L381.2 503.0 L382.0 509.5" fill="none" stroke="#0000ff" stroke-width="1.1" stroke-linejoin="round"/><path d="M483.0 504.0 L486.9 509.5" fill="none" stroke="#0000ff" stroke-width="1.1" stroke-linejoin="round"/><path d="M507.0 509.5 L507.3 499.2 L566.0 506.5 L567.0 509.5" fill="none" stroke="#0000ff" stroke-width="1.1" stroke-linejoin="round"/><path d="M586.0 509.5 L586.2 505.0 L586.5 509.5" fill="none" stroke="#0000ff" stroke-width="1.1" stroke-linejoin="round"/><path d="M602.5 509.5 L606.2 505.0 L613.1 507.0 L613.5 509.5" fill="none" stroke="#0000ff" stroke-width="1.1" stroke-linejoin="round"/><path d="M658.0 509.5 L658.0 506.0 L661.9 507.0 L662.0 509.5" fill="none" stroke="#0000ff" stroke-width="1.1" stroke-linejoin="round"/><path d="M675.5 509.5 L675.6 503.0 L676.0 509.5" fill="none" stroke="#0000ff" stroke-width="1.1" stroke-linejoin="round"/><path d="M701.0 508.0 L701.5 509.5" fill="none" stroke="#0000ff" stroke-width="1.1" stroke-linejoin="round"/><path d="M791.4 507.0 L791.6 509.5" fill="none" stroke="#0000ff" stroke-width="1.1" stroke-linejoin="round"/><path d="M781.0 509.5 L781.5 505.0 L782.0 509.5" fill="none" stroke="#0000ff" stroke-width="1.1" stroke-linejoin="round"/><path d="M800.0 509.5 L804.4 493.5 L808.0 509.5 L811.2 507.0 L813.0 509.5 L817.5 500.0 L822.5 504.6 L825.6 484.4 L828.8 506.0 L830.0 509.5" fill="none" stroke="#0000ff" stroke-width="1.1" stroke-linejoin="round"/><path d="M849.0 509.5 L849.4 499.0 L850.0 509.5" fill="none" stroke="#0000ff" stroke-width="1.1" stroke-linejoin="round"/><path d="M856.0 509.5 L856.2 502.0 L857.0 509.5" fill="none" stroke="#0000ff" stroke-width="1.1" stroke-linejoin="round"/><path d="M898.0 509.5 L900.0 505.0 L903.8 509.5" fill="none" stroke="#0000ff" stroke-width="1.1" stroke-linejoin="round"/><path d="M931.0 502.0 L932.0 509.5" fill="none" stroke="#0000ff" stroke-width="1.1" stroke-linejoin="round"/><path d="M941.0 509.5 L941.5 505.0 L946.0 505.0 L948.0 500.0 L951.0 498.0 L952.0 502.0 L955.5 497.0 L958.0 509.5" fill="none" stroke="#0000ff" stroke-width="1.1" stroke-linejoin="round"/><path d="M962.0 509.5 L966.0 502.0 L968.6 493.4 L972.0 509.5" fill="none" stroke="#0000ff" stroke-width="1.1" stroke-linejoin="round"/><path d="M987.0 502.0 L988.0 509.5" fill="none" stroke="#0000ff" stroke-width="1.1" stroke-linejoin="round"/><path d="M993.0 509.5 L996.5 496.5 L999.0 498.0 L1003.0 501.0 L1007.0 501.0 L1009.0 499.5" fill="none" stroke="#0000ff" stroke-width="1.1" stroke-linejoin="round"/><path d="M1027.0 495.0 L1030.0 498.0 L1031.0 509.5" fill="none" stroke="#0000ff" stroke-width="1.1" stroke-linejoin="round"/><path d="M1046.5 509.5 L1047.0 497.0 L1047.5 509.5" fill="none" stroke="#0000ff" stroke-width="1.1" stroke-linejoin="round"/><path d="M1062.0 509.5 L1071.0 500.0 L1076.0 509.5" fill="none" stroke="#0000ff" stroke-width="1.1" stroke-linejoin="round"/><rect x="95" y="509" width="986" height="1" fill="#333"/><rect x="91" y="508" width="4" height="1" fill="#333"/><rect x="91" y="507" width="4" height="1" fill="#333"/><rect x="91" y="505" width="4" height="1" fill="#333"/><rect x="91" y="504" width="4" height="1" fill="#333"/><rect x="91" y="503" width="4" height="1" fill="#333"/><rect x="87" y="502" width="8" height="1" fill="#333"/><rect x="91" y="495" width="4" height="1" fill="#333"/><rect x="91" y="491" width="4" height="1" fill="#333"/><rect x="91" y="489" width="4" height="1" fill="#333"/><rect x="91" y="487" width="4" height="1" fill="#333"/><rect x="91" y="485" width="4" height="1" fill="#333"/><rect x="91" y="483" width="4" height="1" fill="#333"/><rect x="91" y="482" width="4" height="1" fill="#333"/><rect x="91" y="481" width="4" height="1" fill="#333"/><rect x="87" y="480" width="8" height="1" fill="#333"/><rect x="91" y="473" width="4" height="1" fill="#333"/><rect x="91" y="469" width="4" height="1" fill="#333"/><rect x="91" y="467" width="4" height="1" fill="#333"/><rect x="91" y="465" width="4" height="1" fill="#333"/><rect x="91" y="463" width="4" height="1" fill="#333"/><rect x="91" y="461" width="4" height="1" fill="#333"/><rect x="91" y="460" width="4" height="1" fill="#333"/><rect x="91" y="459" width="4" height="1" fill="#333"/><rect x="87" y="458" width="8" height="1" fill="#333"/><rect x="91" y="451" width="4" height="1" fill="#333"/><rect x="91" y="447" width="4" height="1" fill="#333"/><rect x="91" y="445" width="4" height="1" fill="#333"/><rect x="91" y="443" width="4" height="1" fill="#333"/><rect x="91" y="441" width="4" height="1" fill="#333"/><rect x="91" y="439" width="4" height="1" fill="#333"/><rect x="91" y="438" width="4" height="1" fill="#333"/><rect x="91" y="437" width="4" height="1" fill="#333"/><rect x="87" y="436" width="8" height="1" fill="#333"/><rect x="91" y="429" width="4" height="1" fill="#333"/><rect x="91" y="425" width="4" height="1" fill="#333"/><rect x="91" y="423" width="4" height="1" fill="#333"/><rect x="91" y="421" width="4" height="1" fill="#333"/><text x="53.3" y="443.7" font-size="12.5" text-anchor="start" fill="#333" textLength="13.5" lengthAdjust="spacingAndGlyphs" xml:space="preserve">10</text><text x="68.8" y="438.2" font-size="11.5" text-anchor="start" fill="#333" textLength="13.8" lengthAdjust="spacingAndGlyphs" xml:space="preserve">−9</text><text x="45.39999999999999" y="465.7" font-size="12.5" text-anchor="start" fill="#333" textLength="13.5" lengthAdjust="spacingAndGlyphs" xml:space="preserve">10</text><text x="60.89999999999999" y="460.2" font-size="11.5" text-anchor="start" fill="#333" textLength="21.7" lengthAdjust="spacingAndGlyphs" xml:space="preserve">−10</text><text x="45.39999999999999" y="487.8" font-size="12.5" text-anchor="start" fill="#333" textLength="13.5" lengthAdjust="spacingAndGlyphs" xml:space="preserve">10</text><text x="60.89999999999999" y="482.3" font-size="11.5" text-anchor="start" fill="#333" textLength="21.7" lengthAdjust="spacingAndGlyphs" xml:space="preserve">−11</text><text x="45.39999999999999" y="509.8" font-size="12.5" text-anchor="start" fill="#333" textLength="13.5" lengthAdjust="spacingAndGlyphs" xml:space="preserve">10</text><text x="60.89999999999999" y="504.3" font-size="11.5" text-anchor="start" fill="#333" textLength="21.7" lengthAdjust="spacingAndGlyphs" xml:space="preserve">−12</text><text transform="translate(35,466) rotate(-90)" font-size="12.5" text-anchor="middle" fill="#333" textLength="68.5" lengthAdjust="spacingAndGlyphs">P dyn/cm^2</text><rect x="136" y="507" width="1" height="2" fill="#333"/><rect x="177" y="507" width="1" height="2" fill="#333"/><rect x="218" y="506" width="1" height="3" fill="#333"/><rect x="259" y="507" width="1" height="2" fill="#333"/><rect x="300" y="507" width="1" height="2" fill="#333"/><rect x="341" y="506" width="1" height="3" fill="#333"/><rect x="382" y="507" width="1" height="2" fill="#333"/><rect x="423" y="507" width="1" height="2" fill="#333"/><rect x="464" y="506" width="1" height="3" fill="#333"/><rect x="505" y="507" width="1" height="2" fill="#333"/><rect x="546" y="507" width="1" height="2" fill="#333"/><rect x="587" y="506" width="1" height="3" fill="#333"/><rect x="628" y="507" width="1" height="2" fill="#333"/><rect x="669" y="507" width="1" height="2" fill="#333"/><rect x="710" y="506" width="1" height="3" fill="#333"/><rect x="751" y="507" width="1" height="2" fill="#333"/><rect x="792" y="507" width="1" height="2" fill="#333"/><rect x="833" y="506" width="1" height="3" fill="#333"/><rect x="874" y="507" width="1" height="2" fill="#333"/><rect x="915" y="507" width="1" height="2" fill="#333"/><rect x="956" y="506" width="1" height="3" fill="#333"/><rect x="997" y="507" width="1" height="2" fill="#333"/><rect x="1038" y="507" width="1" height="2" fill="#333"/><line x1="1091" y1="426" x2="1103" y2="430.5" stroke="#0000ff" stroke-width="1.3"/><text x="1107.5" y="433" font-size="12.5" text-anchor="start" fill="#333" textLength="52.5" lengthAdjust="spacingAndGlyphs" xml:space="preserve">CHEMS−P</text><line x1="1091" y1="441" x2="1103" y2="445.5" stroke="#ff0000" stroke-width="1.3"/><text x="1107.5" y="448" font-size="12.5" text-anchor="start" fill="#333" textLength="52.5" lengthAdjust="spacingAndGlyphs" xml:space="preserve">LEMMS−P</text><line x1="1091" y1="456" x2="1103" y2="460.5" stroke="#00ee00" stroke-width="1.3"/><text x="1107.5" y="463" font-size="12.5" text-anchor="start" fill="#333" textLength="54.5" lengthAdjust="spacingAndGlyphs" xml:space="preserve">CHEMS−O</text><rect x="95" y="513" width="986" height="179" fill="#000"/><path d="M328 514h1v12h-1zM377 514h1v12h-1zM463 514h1v12h-1zM508 514h1v12h-1zM650 514h1v12h-1zM653 514h1v12h-1zM729 514h1v12h-1zM833 514h2v12h-2zM918 514h1v12h-1zM1010 514h1v12h-1zM127 526h1v26h-1zM165 526h2v26h-2zM236 526h1v26h-1zM327 526h1v26h-1zM360 526h1v26h-1zM363 526h1v26h-1zM433 526h2v26h-2zM458 526h1v26h-1zM461 526h1v26h-1zM463 526h1v26h-1zM507 526h2v26h-2zM511 526h1v26h-1zM589 526h1v26h-1zM599 526h1v26h-1zM607 526h1v26h-1zM611 526h2v26h-2zM653 526h1v26h-1zM667 526h1v26h-1zM669 526h1v26h-1zM672 526h3v26h-3zM763 526h1v26h-1zM835 526h1v26h-1zM867 526h1v26h-1zM878 526h3v26h-3zM884 526h1v26h-1zM887 526h1v26h-1zM922 526h2v26h-2zM1007 526h4v26h-4zM1013 526h1v26h-1zM165 552h1v16h-1zM224 552h2v16h-2zM236 552h1v16h-1zM263 552h1v16h-1zM328 552h1v16h-1zM363 552h1v16h-1zM365 552h1v16h-1zM433 552h1v16h-1zM458 552h1v16h-1zM508 552h1v16h-1zM563 552h1v16h-1zM611 552h1v16h-1zM672 552h1v16h-1zM763 552h1v16h-1zM833 552h2v16h-2zM236 568h1v13h-1zM328 568h1v13h-1zM363 568h1v13h-1zM377 568h1v13h-1zM433 568h1v13h-1zM612 568h1v13h-1zM650 568h1v13h-1zM652 568h2v13h-2zM675 568h1v13h-1zM677 568h1v13h-1zM731 568h1v13h-1zM763 568h1v13h-1zM834 568h2v13h-2zM887 568h1v13h-1zM107 581h1v24h-1zM207 581h1v24h-1zM220 581h1v24h-1zM224 581h2v24h-2zM263 581h1v24h-1zM328 581h1v24h-1zM360 581h2v24h-2zM363 581h1v24h-1zM365 581h1v24h-1zM377 581h2v24h-2zM433 581h1v24h-1zM458 581h1v24h-1zM460 581h1v24h-1zM463 581h1v24h-1zM508 581h2v24h-2zM589 581h1v24h-1zM599 581h1v24h-1zM607 581h1v24h-1zM611 581h1v24h-1zM645 581h1v24h-1zM653 581h1v24h-1zM669 581h1v24h-1zM672 581h4v24h-4zM677 581h1v24h-1zM689 581h1v24h-1zM729 581h1v24h-1zM731 581h1v24h-1zM763 581h1v24h-1zM833 581h3v24h-3zM877 581h1v24h-1zM879 581h2v24h-2zM884 581h1v24h-1zM887 581h1v24h-1zM918 581h1v24h-1zM922 581h2v24h-2zM1004 581h1v24h-1zM1010 581h1v24h-1zM1013 581h1v24h-1zM107 605h1v13h-1zM165 605h2v13h-2zM206 605h2v13h-2zM210 605h2v13h-2zM220 605h1v13h-1zM224 605h2v13h-2zM263 605h1v13h-1zM328 605h1v13h-1zM360 605h1v13h-1zM363 605h1v13h-1zM377 605h2v13h-2zM433 605h1v13h-1zM458 605h1v13h-1zM460 605h4v13h-4zM508 605h2v13h-2zM563 605h1v13h-1zM599 605h1v13h-1zM607 605h1v13h-1zM609 605h1v13h-1zM611 605h2v13h-2zM644 605h3v13h-3zM650 605h1v13h-1zM652 605h2v13h-2zM665 605h3v13h-3zM669 605h9v13h-9zM689 605h1v13h-1zM729 605h1v13h-1zM731 605h1v13h-1zM763 605h2v13h-2zM833 605h3v13h-3zM842 605h3v13h-3zM867 605h1v13h-1zM879 605h1v13h-1zM884 605h5v13h-5zM918 605h1v13h-1zM922 605h2v13h-2zM1003 605h2v13h-2zM1006 605h5v13h-5zM1013 605h1v13h-1zM127 618h1v12h-1zM163 618h1v12h-1zM165 618h2v12h-2zM174 618h1v12h-1zM206 618h6v12h-6zM224 618h2v12h-2zM236 618h2v12h-2zM263 618h1v12h-1zM328 618h1v12h-1zM360 618h2v12h-2zM363 618h3v12h-3zM377 618h1v12h-1zM401 618h1v12h-1zM428 618h1v12h-1zM433 618h2v12h-2zM458 618h1v12h-1zM463 618h1v12h-1zM508 618h2v12h-2zM563 618h1v12h-1zM589 618h2v12h-2zM607 618h1v12h-1zM609 618h1v12h-1zM611 618h2v12h-2zM645 618h2v12h-2zM650 618h4v12h-4zM665 618h3v12h-3zM669 618h1v12h-1zM672 618h4v12h-4zM677 618h1v12h-1zM729 618h1v12h-1zM731 618h2v12h-2zM763 618h1v12h-1zM833 618h3v12h-3zM842 618h2v12h-2zM867 618h1v12h-1zM877 618h4v12h-4zM884 618h1v12h-1zM887 618h1v12h-1zM918 618h1v12h-1zM923 618h1v12h-1zM1003 618h1v12h-1zM1006 618h5v12h-5zM1012 618h2v12h-2zM163 630h1v18h-1zM165 630h2v18h-2zM173 630h2v18h-2zM206 630h2v18h-2zM209 630h3v18h-3zM220 630h1v18h-1zM222 630h1v18h-1zM224 630h2v18h-2zM236 630h1v18h-1zM263 630h1v18h-1zM326 630h3v18h-3zM359 630h3v18h-3zM363 630h3v18h-3zM377 630h1v18h-1zM410 630h1v18h-1zM428 630h1v18h-1zM433 630h2v18h-2zM458 630h3v18h-3zM463 630h1v18h-1zM507 630h5v18h-5zM589 630h1v18h-1zM599 630h1v18h-1zM607 630h1v18h-1zM609 630h1v18h-1zM611 630h2v18h-2zM645 630h2v18h-2zM650 630h4v18h-4zM669 630h1v18h-1zM675 630h1v18h-1zM677 630h1v18h-1zM729 630h1v18h-1zM731 630h1v18h-1zM739 630h1v18h-1zM763 630h1v18h-1zM833 630h3v18h-3zM842 630h3v18h-3zM867 630h1v18h-1zM877 630h4v18h-4zM884 630h1v18h-1zM887 630h1v18h-1zM918 630h1v18h-1zM922 630h2v18h-2zM1006 630h8v18h-8zM127 648h1v17h-1zM165 648h1v17h-1zM206 648h2v17h-2zM209 648h1v17h-1zM211 648h1v17h-1zM224 648h2v17h-2zM236 648h2v17h-2zM263 648h1v17h-1zM326 648h3v17h-3zM360 648h2v17h-2zM363 648h3v17h-3zM377 648h1v17h-1zM428 648h1v17h-1zM433 648h1v17h-1zM458 648h1v17h-1zM463 648h1v17h-1zM508 648h2v17h-2zM563 648h1v17h-1zM607 648h1v17h-1zM611 648h2v17h-2zM650 648h4v17h-4zM665 648h1v17h-1zM667 648h1v17h-1zM669 648h1v17h-1zM672 648h4v17h-4zM690 648h1v17h-1zM729 648h1v17h-1zM731 648h1v17h-1zM739 648h1v17h-1zM762 648h3v17h-3zM833 648h3v17h-3zM842 648h2v17h-2zM877 648h4v17h-4zM884 648h2v17h-2zM887 648h1v17h-1zM905 648h1v17h-1zM918 648h1v17h-1zM922 648h2v17h-2zM1003 648h2v17h-2zM1010 648h1v17h-1zM1013 648h1v17h-1zM220 665h1v12h-1zM224 665h1v12h-1zM326 665h3v12h-3zM377 665h1v12h-1zM458 665h1v12h-1zM460 665h1v12h-1zM462 665h2v12h-2zM508 665h2v12h-2zM611 665h2v12h-2zM646 665h1v12h-1zM651 665h3v12h-3zM666 665h2v12h-2zM729 665h1v12h-1zM731 665h1v12h-1zM763 665h1v12h-1zM833 665h2v12h-2zM878 665h3v12h-3zM887 665h1v12h-1zM1008 665h6v12h-6zM207 677h1v13h-1zM209 677h3v13h-3zM236 677h2v13h-2zM263 677h1v13h-1zM326 677h1v13h-1zM328 677h1v13h-1zM363 677h1v13h-1zM365 677h1v13h-1zM377 677h1v13h-1zM428 677h1v13h-1zM433 677h2v13h-2zM460 677h4v13h-4zM508 677h2v13h-2zM511 677h1v13h-1zM589 677h1v13h-1zM599 677h1v13h-1zM607 677h1v13h-1zM611 677h2v13h-2zM645 677h2v13h-2zM665 677h1v13h-1zM669 677h2v13h-2zM672 677h4v13h-4zM729 677h1v13h-1zM731 677h1v13h-1zM763 677h1v13h-1zM833 677h3v13h-3zM884 677h1v13h-1zM887 677h1v13h-1zM905 677h1v13h-1zM918 677h1v13h-1zM922 677h2v13h-2zM1003 677h2v13h-2zM1008 677h4v13h-4zM1013 677h1v13h-1z" fill="url(#gc)"/><path d="M105 514h2v12h-2zM168 514h3v12h-3zM182 514h1v12h-1zM189 514h2v12h-2zM217 514h1v12h-1zM245 514h2v12h-2zM252 514h1v12h-1zM320 514h1v12h-1zM369 514h1v12h-1zM376 514h1v12h-1zM382 514h2v12h-2zM385 514h1v12h-1zM411 514h1v12h-1zM450 514h1v12h-1zM488 514h1v12h-1zM496 514h1v12h-1zM571 514h1v12h-1zM592 514h2v12h-2zM603 514h2v12h-2zM614 514h1v12h-1zM617 514h1v12h-1zM637 514h1v12h-1zM678 514h1v12h-1zM683 514h1v12h-1zM703 514h1v12h-1zM735 514h1v12h-1zM751 514h2v12h-2zM754 514h1v12h-1zM838 514h1v12h-1zM841 514h1v12h-1zM99 526h1v26h-1zM101 526h1v26h-1zM103 526h3v26h-3zM114 526h1v26h-1zM118 526h1v26h-1zM134 526h4v26h-4zM141 526h1v26h-1zM156 526h4v26h-4zM167 526h4v26h-4zM182 526h1v26h-1zM186 526h2v26h-2zM189 526h2v26h-2zM203 526h1v26h-1zM240 526h1v26h-1zM246 526h1v26h-1zM273 526h1v26h-1zM276 526h1v26h-1zM278 526h1v26h-1zM297 526h1v26h-1zM307 526h1v26h-1zM319 526h3v26h-3zM331 526h1v26h-1zM339 526h1v26h-1zM341 526h1v26h-1zM368 526h2v26h-2zM372 526h2v26h-2zM376 526h1v26h-1zM380 526h2v26h-2zM383 526h1v26h-1zM389 526h1v26h-1zM392 526h1v26h-1zM397 526h1v26h-1zM411 526h1v26h-1zM421 526h1v26h-1zM430 526h2v26h-2zM436 526h2v26h-2zM441 526h1v26h-1zM444 526h1v26h-1zM449 526h1v26h-1zM451 526h1v26h-1zM469 526h2v26h-2zM474 526h2v26h-2zM483 526h2v26h-2zM487 526h2v26h-2zM490 526h1v26h-1zM501 526h2v26h-2zM504 526h3v26h-3zM580 526h2v26h-2zM586 526h1v26h-1zM592 526h1v26h-1zM596 526h1v26h-1zM604 526h1v26h-1zM614 526h1v26h-1zM623 526h1v26h-1zM639 526h1v26h-1zM647 526h1v26h-1zM654 526h1v26h-1zM678 526h2v26h-2zM681 526h2v26h-2zM693 526h1v26h-1zM703 526h1v26h-1zM725 526h1v26h-1zM749 526h4v26h-4zM765 526h1v26h-1zM838 526h1v26h-1zM853 526h2v26h-2zM862 526h1v26h-1zM874 526h2v26h-2zM928 526h1v26h-1zM101 552h1v16h-1zM114 552h1v16h-1zM118 552h1v16h-1zM130 552h1v16h-1zM167 552h1v16h-1zM189 552h1v16h-1zM275 552h2v16h-2zM279 552h1v16h-1zM310 552h1v16h-1zM319 552h2v16h-2zM375 552h1v16h-1zM430 552h1v16h-1zM441 552h1v16h-1zM444 552h1v16h-1zM449 552h1v16h-1zM475 552h1v16h-1zM483 552h1v16h-1zM487 552h1v16h-1zM490 552h1v16h-1zM504 552h1v16h-1zM570 552h1v16h-1zM572 552h1v16h-1zM580 552h1v16h-1zM593 552h1v16h-1zM614 552h1v16h-1zM634 552h1v16h-1zM637 552h1v16h-1zM678 552h2v16h-2zM703 552h1v16h-1zM725 552h1v16h-1zM752 552h1v16h-1zM754 552h2v16h-2zM765 552h1v16h-1zM841 552h1v16h-1zM104 568h1v13h-1zM135 568h2v13h-2zM156 568h1v13h-1zM169 568h2v13h-2zM182 568h1v13h-1zM184 568h2v13h-2zM252 568h1v13h-1zM278 568h1v13h-1zM300 568h1v13h-1zM307 568h1v13h-1zM319 568h3v13h-3zM372 568h1v13h-1zM376 568h1v13h-1zM385 568h1v13h-1zM426 568h1v13h-1zM470 568h1v13h-1zM483 568h1v13h-1zM487 568h1v13h-1zM502 568h5v13h-5zM572 568h1v13h-1zM581 568h1v13h-1zM592 568h2v13h-2zM603 568h1v13h-1zM614 568h1v13h-1zM639 568h1v13h-1zM654 568h1v13h-1zM678 568h1v13h-1zM718 568h1v13h-1zM725 568h1v13h-1zM751 568h1v13h-1zM768 568h1v13h-1zM771 568h1v13h-1zM773 568h1v13h-1zM862 568h1v13h-1zM868 568h1v13h-1zM933 568h2v13h-2zM101 581h1v24h-1zM104 581h3v24h-3zM110 581h2v24h-2zM117 581h1v24h-1zM130 581h2v24h-2zM133 581h1v24h-1zM156 581h1v24h-1zM158 581h1v24h-1zM167 581h4v24h-4zM185 581h2v24h-2zM202 581h1v24h-1zM213 581h2v24h-2zM218 581h1v24h-1zM240 581h1v24h-1zM245 581h2v24h-2zM275 581h2v24h-2zM278 581h3v24h-3zM300 581h1v24h-1zM304 581h2v24h-2zM310 581h2v24h-2zM314 581h1v24h-1zM319 581h3v24h-3zM330 581h1v24h-1zM339 581h1v24h-1zM341 581h2v24h-2zM351 581h1v24h-1zM369 581h2v24h-2zM375 581h2v24h-2zM380 581h4v24h-4zM385 581h1v24h-1zM392 581h2v24h-2zM398 581h2v24h-2zM411 581h2v24h-2zM421 581h1v24h-1zM424 581h2v24h-2zM430 581h1v24h-1zM441 581h2v24h-2zM447 581h5v24h-5zM469 581h2v24h-2zM472 581h1v24h-1zM475 581h1v24h-1zM483 581h1v24h-1zM487 581h3v24h-3zM492 581h1v24h-1zM496 581h1v24h-1zM502 581h5v24h-5zM562 581h1v24h-1zM571 581h1v24h-1zM574 581h1v24h-1zM576 581h1v24h-1zM579 581h1v24h-1zM581 581h1v24h-1zM583 581h1v24h-1zM586 581h1v24h-1zM591 581h3v24h-3zM596 581h1v24h-1zM598 581h1v24h-1zM602 581h3v24h-3zM617 581h2v24h-2zM636 581h1v24h-1zM638 581h3v24h-3zM647 581h1v24h-1zM679 581h1v24h-1zM682 581h2v24h-2zM700 581h4v24h-4zM718 581h1v24h-1zM725 581h1v24h-1zM752 581h1v24h-1zM755 581h1v24h-1zM765 581h4v24h-4zM771 581h3v24h-3zM836 581h1v24h-1zM841 581h1v24h-1zM847 581h1v24h-1zM850 581h1v24h-1zM852 581h2v24h-2zM855 581h1v24h-1zM870 581h2v24h-2zM907 581h1v24h-1zM921 581h1v24h-1zM928 581h1v24h-1zM934 581h1v24h-1zM99 605h1v13h-1zM101 605h6v13h-6zM115 605h5v13h-5zM128 605h1v13h-1zM130 605h9v13h-9zM141 605h1v13h-1zM156 605h4v13h-4zM167 605h2v13h-2zM170 605h1v13h-1zM182 605h6v13h-6zM189 605h1v13h-1zM191 605h1v13h-1zM199 605h2v13h-2zM203 605h1v13h-1zM212 605h3v13h-3zM245 605h2v13h-2zM252 605h2v13h-2zM255 605h1v13h-1zM275 605h2v13h-2zM278 605h2v13h-2zM297 605h1v13h-1zM300 605h1v13h-1zM302 605h4v13h-4zM307 605h2v13h-2zM319 605h2v13h-2zM331 605h2v13h-2zM341 605h2v13h-2zM368 605h1v13h-1zM370 605h1v13h-1zM376 605h1v13h-1zM380 605h6v13h-6zM392 605h1v13h-1zM398 605h2v13h-2zM411 605h2v13h-2zM414 605h2v13h-2zM423 605h4v13h-4zM441 605h2v13h-2zM444 605h1v13h-1zM447 605h4v13h-4zM469 605h2v13h-2zM472 605h1v13h-1zM474 605h3v13h-3zM483 605h2v13h-2zM486 605h4v13h-4zM496 605h1v13h-1zM502 605h5v13h-5zM562 605h1v13h-1zM571 605h4v13h-4zM576 605h1v13h-1zM579 605h3v13h-3zM586 605h1v13h-1zM592 605h2v13h-2zM598 605h1v13h-1zM603 605h2v13h-2zM614 605h1v13h-1zM617 605h2v13h-2zM623 605h1v13h-1zM634 605h1v13h-1zM636 605h2v13h-2zM639 605h2v13h-2zM643 605h1v13h-1zM655 605h1v13h-1zM678 605h2v13h-2zM681 605h3v13h-3zM693 605h1v13h-1zM701 605h1v13h-1zM703 605h1v13h-1zM718 605h1v13h-1zM734 605h2v13h-2zM737 605h1v13h-1zM747 605h3v13h-3zM751 605h2v13h-2zM754 605h2v13h-2zM765 605h4v13h-4zM771 605h1v13h-1zM773 605h1v13h-1zM838 605h1v13h-1zM841 605h1v13h-1zM845 605h3v13h-3zM852 605h4v13h-4zM861 605h2v13h-2zM871 605h1v13h-1zM907 605h1v13h-1zM913 605h1v13h-1zM921 605h1v13h-1zM926 605h1v13h-1zM931 605h1v13h-1zM933 605h2v13h-2zM101 618h6v12h-6zM113 618h2v12h-2zM117 618h2v12h-2zM128 618h1v12h-1zM130 618h2v12h-2zM133 618h4v12h-4zM141 618h2v12h-2zM156 618h1v12h-1zM158 618h1v12h-1zM162 618h1v12h-1zM167 618h4v12h-4zM182 618h2v12h-2zM185 618h3v12h-3zM189 618h3v12h-3zM200 618h1v12h-1zM202 618h2v12h-2zM234 618h2v12h-2zM240 618h1v12h-1zM245 618h2v12h-2zM252 618h2v12h-2zM255 618h1v12h-1zM273 618h1v12h-1zM275 618h6v12h-6zM297 618h1v12h-1zM300 618h1v12h-1zM304 618h1v12h-1zM309 618h4v12h-4zM319 618h3v12h-3zM323 618h1v12h-1zM330 618h2v12h-2zM338 618h2v12h-2zM342 618h1v12h-1zM366 618h5v12h-5zM375 618h2v12h-2zM382 618h2v12h-2zM385 618h1v12h-1zM388 618h2v12h-2zM392 618h1v12h-1zM394 618h2v12h-2zM398 618h3v12h-3zM411 618h2v12h-2zM414 618h1v12h-1zM421 618h1v12h-1zM424 618h4v12h-4zM429 618h3v12h-3zM436 618h1v12h-1zM441 618h2v12h-2zM444 618h1v12h-1zM447 618h3v12h-3zM451 618h1v12h-1zM469 618h4v12h-4zM475 618h2v12h-2zM483 618h1v12h-1zM485 618h5v12h-5zM491 618h2v12h-2zM496 618h1v12h-1zM499 618h1v12h-1zM501 618h1v12h-1zM505 618h2v12h-2zM562 618h1v12h-1zM570 618h3v12h-3zM579 618h3v12h-3zM583 618h1v12h-1zM586 618h1v12h-1zM591 618h3v12h-3zM598 618h1v12h-1zM600 618h5v12h-5zM614 618h1v12h-1zM617 618h2v12h-2zM623 618h1v12h-1zM636 618h4v12h-4zM647 618h1v12h-1zM657 618h1v12h-1zM678 618h2v12h-2zM683 618h1v12h-1zM693 618h1v12h-1zM701 618h1v12h-1zM703 618h1v12h-1zM718 618h1v12h-1zM722 618h4v12h-4zM733 618h3v12h-3zM744 618h1v12h-1zM748 618h8v12h-8zM765 618h2v12h-2zM768 618h1v12h-1zM771 618h1v12h-1zM792 618h1v12h-1zM836 618h1v12h-1zM838 618h1v12h-1zM841 618h1v12h-1zM846 618h2v12h-2zM850 618h1v12h-1zM852 618h4v12h-4zM862 618h1v12h-1zM868 618h3v12h-3zM876 618h1v12h-1zM911 618h2v12h-2zM926 618h1v12h-1zM928 618h1v12h-1zM930 618h5v12h-5zM1000 618h2v12h-2zM101 630h6v18h-6zM111 630h1v18h-1zM113 630h2v18h-2zM117 630h3v18h-3zM130 630h1v18h-1zM132 630h6v18h-6zM141 630h1v18h-1zM156 630h1v18h-1zM158 630h1v18h-1zM162 630h1v18h-1zM167 630h6v18h-6zM182 630h6v18h-6zM189 630h3v18h-3zM198 630h3v18h-3zM202 630h2v18h-2zM212 630h5v18h-5zM234 630h2v18h-2zM240 630h1v18h-1zM245 630h2v18h-2zM252 630h2v18h-2zM255 630h1v18h-1zM276 630h1v18h-1zM278 630h3v18h-3zM297 630h1v18h-1zM300 630h1v18h-1zM302 630h4v18h-4zM307 630h2v18h-2zM310 630h1v18h-1zM319 630h5v18h-5zM338 630h2v18h-2zM341 630h2v18h-2zM352 630h1v18h-1zM367 630h4v18h-4zM372 630h2v18h-2zM375 630h2v18h-2zM380 630h4v18h-4zM385 630h1v18h-1zM388 630h3v18h-3zM392 630h4v18h-4zM398 630h2v18h-2zM406 630h1v18h-1zM411 630h5v18h-5zM419 630h3v18h-3zM424 630h4v18h-4zM429 630h2v18h-2zM435 630h3v18h-3zM441 630h2v18h-2zM444 630h2v18h-2zM447 630h5v18h-5zM469 630h2v18h-2zM472 630h1v18h-1zM474 630h3v18h-3zM481 630h3v18h-3zM487 630h6v18h-6zM496 630h1v18h-1zM499 630h1v18h-1zM502 630h5v18h-5zM562 630h1v18h-1zM570 630h1v18h-1zM572 630h1v18h-1zM576 630h1v18h-1zM579 630h3v18h-3zM583 630h1v18h-1zM586 630h1v18h-1zM591 630h3v18h-3zM595 630h4v18h-4zM602 630h3v18h-3zM614 630h1v18h-1zM617 630h2v18h-2zM623 630h1v18h-1zM625 630h1v18h-1zM634 630h4v18h-4zM639 630h2v18h-2zM647 630h1v18h-1zM649 630h1v18h-1zM654 630h2v18h-2zM678 630h6v18h-6zM701 630h3v18h-3zM718 630h1v18h-1zM722 630h1v18h-1zM725 630h1v18h-1zM735 630h1v18h-1zM737 630h2v18h-2zM744 630h1v18h-1zM748 630h5v18h-5zM754 630h2v18h-2zM765 630h4v18h-4zM771 630h1v18h-1zM773 630h1v18h-1zM792 630h1v18h-1zM836 630h3v18h-3zM840 630h2v18h-2zM846 630h2v18h-2zM850 630h1v18h-1zM852 630h6v18h-6zM862 630h1v18h-1zM868 630h1v18h-1zM872 630h1v18h-1zM882 630h1v18h-1zM911 630h1v18h-1zM921 630h1v18h-1zM931 630h1v18h-1zM933 630h2v18h-2zM103 648h4v17h-4zM114 648h1v17h-1zM117 648h2v17h-2zM134 648h1v17h-1zM136 648h1v17h-1zM141 648h2v17h-2zM158 648h1v17h-1zM167 648h4v17h-4zM182 648h1v17h-1zM187 648h1v17h-1zM189 648h2v17h-2zM200 648h1v17h-1zM202 648h1v17h-1zM212 648h2v17h-2zM235 648h1v17h-1zM240 648h1v17h-1zM242 648h1v17h-1zM245 648h2v17h-2zM252 648h2v17h-2zM275 648h2v17h-2zM278 648h3v17h-3zM296 648h2v17h-2zM300 648h1v17h-1zM304 648h2v17h-2zM307 648h2v17h-2zM310 648h1v17h-1zM312 648h1v17h-1zM319 648h3v17h-3zM330 648h2v17h-2zM351 648h2v17h-2zM354 648h2v17h-2zM368 648h3v17h-3zM372 648h2v17h-2zM375 648h2v17h-2zM380 648h6v17h-6zM388 648h1v17h-1zM390 648h1v17h-1zM392 648h8v17h-8zM412 648h1v17h-1zM414 648h2v17h-2zM419 648h1v17h-1zM421 648h1v17h-1zM424 648h1v17h-1zM430 648h2v17h-2zM436 648h2v17h-2zM444 648h1v17h-1zM447 648h4v17h-4zM469 648h4v17h-4zM474 648h1v17h-1zM483 648h7v17h-7zM496 648h1v17h-1zM499 648h1v17h-1zM501 648h3v17h-3zM505 648h2v17h-2zM570 648h4v17h-4zM579 648h3v17h-3zM583 648h2v17h-2zM591 648h3v17h-3zM598 648h1v17h-1zM603 648h2v17h-2zM614 648h1v17h-1zM617 648h2v17h-2zM623 648h1v17h-1zM634 648h1v17h-1zM639 648h1v17h-1zM647 648h1v17h-1zM654 648h4v17h-4zM678 648h2v17h-2zM681 648h1v17h-1zM683 648h1v17h-1zM722 648h4v17h-4zM734 648h5v17h-5zM747 648h1v17h-1zM751 648h2v17h-2zM754 648h2v17h-2zM765 648h4v17h-4zM771 648h3v17h-3zM792 648h1v17h-1zM836 648h1v17h-1zM838 648h1v17h-1zM841 648h1v17h-1zM846 648h2v17h-2zM852 648h1v17h-1zM854 648h2v17h-2zM862 648h1v17h-1zM871 648h4v17h-4zM906 648h2v17h-2zM912 648h2v17h-2zM921 648h1v17h-1zM931 648h4v17h-4zM1000 648h1v17h-1zM105 665h2v12h-2zM130 665h1v12h-1zM158 665h1v12h-1zM170 665h1v12h-1zM177 665h2v12h-2zM182 665h1v12h-1zM184 665h3v12h-3zM189 665h2v12h-2zM199 665h1v12h-1zM245 665h2v12h-2zM276 665h1v12h-1zM278 665h2v12h-2zM297 665h1v12h-1zM307 665h2v12h-2zM319 665h3v12h-3zM323 665h1v12h-1zM341 665h2v12h-2zM351 665h1v12h-1zM370 665h1v12h-1zM372 665h1v12h-1zM376 665h1v12h-1zM380 665h6v12h-6zM398 665h2v12h-2zM411 665h1v12h-1zM415 665h1v12h-1zM424 665h3v12h-3zM430 665h2v12h-2zM436 665h1v12h-1zM447 665h2v12h-2zM469 665h2v12h-2zM472 665h1v12h-1zM475 665h1v12h-1zM482 665h3v12h-3zM487 665h1v12h-1zM492 665h1v12h-1zM505 665h2v12h-2zM571 665h2v12h-2zM579 665h3v12h-3zM593 665h1v12h-1zM614 665h1v12h-1zM617 665h2v12h-2zM623 665h1v12h-1zM636 665h5v12h-5zM647 665h1v12h-1zM654 665h2v12h-2zM700 665h2v12h-2zM703 665h1v12h-1zM725 665h1v12h-1zM735 665h1v12h-1zM744 665h1v12h-1zM748 665h1v12h-1zM751 665h2v12h-2zM754 665h2v12h-2zM765 665h4v12h-4zM773 665h1v12h-1zM792 665h1v12h-1zM841 665h1v12h-1zM846 665h2v12h-2zM850 665h1v12h-1zM852 665h4v12h-4zM857 665h1v12h-1zM868 665h4v12h-4zM931 665h1v12h-1zM933 665h2v12h-2zM99 677h1v13h-1zM101 677h1v13h-1zM103 677h1v13h-1zM118 677h1v13h-1zM128 677h1v13h-1zM135 677h3v13h-3zM158 677h1v13h-1zM182 677h6v13h-6zM199 677h2v13h-2zM234 677h2v13h-2zM252 677h2v13h-2zM255 677h1v13h-1zM275 677h6v13h-6zM296 677h2v13h-2zM300 677h1v13h-1zM314 677h1v13h-1zM319 677h2v13h-2zM338 677h1v13h-1zM368 677h3v13h-3zM372 677h1v13h-1zM376 677h1v13h-1zM380 677h1v13h-1zM383 677h3v13h-3zM389 677h2v13h-2zM392 677h2v13h-2zM411 677h2v13h-2zM416 677h1v13h-1zM419 677h1v13h-1zM424 677h1v13h-1zM426 677h2v13h-2zM429 677h4v13h-4zM441 677h2v13h-2zM447 677h2v13h-2zM483 677h2v13h-2zM486 677h7v13h-7zM496 677h1v13h-1zM499 677h1v13h-1zM501 677h6v13h-6zM583 677h1v13h-1zM586 677h1v13h-1zM591 677h3v13h-3zM598 677h1v13h-1zM603 677h1v13h-1zM614 677h1v13h-1zM617 677h2v13h-2zM623 677h1v13h-1zM634 677h1v13h-1zM636 677h4v13h-4zM647 677h1v13h-1zM678 677h2v13h-2zM681 677h3v13h-3zM693 677h1v13h-1zM700 677h4v13h-4zM718 677h1v13h-1zM725 677h1v13h-1zM735 677h1v13h-1zM747 677h6v13h-6zM754 677h2v13h-2zM765 677h1v13h-1zM768 677h1v13h-1zM771 677h1v13h-1zM773 677h1v13h-1zM792 677h1v13h-1zM836 677h1v13h-1zM838 677h1v13h-1zM841 677h1v13h-1zM846 677h2v13h-2zM850 677h1v13h-1zM852 677h2v13h-2zM862 677h1v13h-1zM868 677h5v13h-5zM906 677h1v13h-1zM921 677h1v13h-1zM926 677h1v13h-1zM932 677h3v13h-3z" fill="url(#gn)"/><path d="M123 514h2v12h-2zM151 514h2v12h-2zM194 514h1v12h-1zM333 514h2v12h-2zM349 514h1v12h-1zM379 514h1v12h-1zM407 514h2v12h-2zM452 514h1v12h-1zM467 514h1v12h-1zM567 514h1v12h-1zM631 514h1v12h-1zM661 514h1v12h-1zM727 514h2v12h-2zM760 514h1v12h-1zM778 514h2v12h-2zM789 514h1v12h-1zM794 514h2v12h-2zM935 514h1v12h-1zM1057 514h1v12h-1zM122 526h2v26h-2zM126 526h1v26h-1zM147 526h1v26h-1zM149 526h1v26h-1zM151 526h2v26h-2zM155 526h1v26h-1zM180 526h1v26h-1zM194 526h1v26h-1zM247 526h1v26h-1zM264 526h2v26h-2zM270 526h1v26h-1zM285 526h1v26h-1zM295 526h1v26h-1zM333 526h3v26h-3zM346 526h1v26h-1zM379 526h1v26h-1zM407 526h2v26h-2zM438 526h2v26h-2zM452 526h3v26h-3zM456 526h1v26h-1zM468 526h1v26h-1zM477 526h1v26h-1zM605 526h2v26h-2zM627 526h1v26h-1zM629 526h3v26h-3zM661 526h4v26h-4zM694 526h1v26h-1zM707 526h2v26h-2zM727 526h2v26h-2zM741 526h2v26h-2zM758 526h1v26h-1zM760 526h1v26h-1zM774 526h2v26h-2zM777 526h4v26h-4zM787 526h1v26h-1zM894 526h3v26h-3zM899 526h2v26h-2zM914 526h1v26h-1zM917 526h1v26h-1zM924 526h1v26h-1zM935 526h1v26h-1zM944 526h1v26h-1zM964 526h1v26h-1zM966 526h1v26h-1zM973 526h2v26h-2zM984 526h1v26h-1zM987 526h1v26h-1zM990 526h1v26h-1zM994 526h3v26h-3zM1017 526h2v26h-2zM1020 526h1v26h-1zM1027 526h2v26h-2zM1031 526h1v26h-1zM1036 526h1v26h-1zM1038 526h1v26h-1zM1057 526h1v26h-1zM1064 526h1v26h-1zM1073 526h1v26h-1zM124 552h1v16h-1zM147 552h1v16h-1zM268 552h1v16h-1zM407 552h1v16h-1zM453 552h2v16h-2zM477 552h1v16h-1zM605 552h1v16h-1zM629 552h1v16h-1zM706 552h1v16h-1zM726 552h1v16h-1zM775 552h1v16h-1zM785 552h1v16h-1zM896 552h1v16h-1zM903 552h1v16h-1zM914 552h1v16h-1zM917 552h1v16h-1zM944 552h2v16h-2zM947 552h1v16h-1zM961 552h1v16h-1zM974 552h1v16h-1zM994 552h3v16h-3zM1018 552h1v16h-1zM1028 552h1v16h-1zM1033 552h1v16h-1zM1047 552h1v16h-1zM1049 552h1v16h-1zM1062 552h2v16h-2zM1073 552h1v16h-1zM151 568h1v13h-1zM153 568h1v13h-1zM179 568h1v13h-1zM197 568h1v13h-1zM264 568h1v13h-1zM333 568h2v13h-2zM566 568h1v13h-1zM605 568h1v13h-1zM658 568h1v13h-1zM661 568h1v13h-1zM726 568h1v13h-1zM758 568h1v13h-1zM760 568h2v13h-2zM774 568h1v13h-1zM777 568h2v13h-2zM780 568h1v13h-1zM789 568h1v13h-1zM791 568h1v13h-1zM795 568h1v13h-1zM863 568h2v13h-2zM900 568h2v13h-2zM914 568h1v13h-1zM945 568h1v13h-1zM947 568h1v13h-1zM974 568h1v13h-1zM983 568h1v13h-1zM995 568h1v13h-1zM1027 568h1v13h-1zM1031 568h2v13h-2zM1036 568h1v13h-1zM1038 568h1v13h-1zM1057 568h1v13h-1zM1061 568h1v13h-1zM1068 568h1v13h-1zM1074 568h1v13h-1zM123 581h1v24h-1zM148 581h2v24h-2zM151 581h4v24h-4zM180 581h2v24h-2zM226 581h2v24h-2zM247 581h1v24h-1zM264 581h1v24h-1zM294 581h2v24h-2zM313 581h1v24h-1zM346 581h2v24h-2zM379 581h1v24h-1zM407 581h2v24h-2zM452 581h3v24h-3zM456 581h2v24h-2zM477 581h1v24h-1zM564 581h1v24h-1zM566 581h2v24h-2zM605 581h1v24h-1zM627 581h2v24h-2zM633 581h1v24h-1zM658 581h1v24h-1zM662 581h1v24h-1zM698 581h2v24h-2zM706 581h6v24h-6zM713 581h1v24h-1zM715 581h1v24h-1zM719 581h1v24h-1zM726 581h3v24h-3zM758 581h1v24h-1zM760 581h1v24h-1zM774 581h2v24h-2zM777 581h4v24h-4zM785 581h1v24h-1zM789 581h2v24h-2zM795 581h2v24h-2zM863 581h2v24h-2zM894 581h1v24h-1zM896 581h1v24h-1zM899 581h2v24h-2zM903 581h1v24h-1zM914 581h1v24h-1zM917 581h1v24h-1zM920 581h1v24h-1zM935 581h1v24h-1zM944 581h2v24h-2zM947 581h1v24h-1zM950 581h1v24h-1zM964 581h3v24h-3zM974 581h1v24h-1zM983 581h2v24h-2zM987 581h1v24h-1zM990 581h1v24h-1zM994 581h1v24h-1zM1023 581h1v24h-1zM1031 581h1v24h-1zM1033 581h1v24h-1zM1038 581h1v24h-1zM1047 581h3v24h-3zM1057 581h1v24h-1zM1069 581h3v24h-3zM1074 581h1v24h-1zM1076 581h1v24h-1zM120 605h4v13h-4zM147 605h1v13h-1zM151 605h2v13h-2zM154 605h2v13h-2zM179 605h1v13h-1zM194 605h1v13h-1zM197 605h1v13h-1zM226 605h1v13h-1zM250 605h1v13h-1zM261 605h2v13h-2zM264 605h2v13h-2zM268 605h1v13h-1zM333 605h3v13h-3zM343 605h1v13h-1zM347 605h1v13h-1zM349 605h1v13h-1zM379 605h1v13h-1zM407 605h2v13h-2zM452 605h1v13h-1zM477 605h1v13h-1zM495 605h1v13h-1zM564 605h4v13h-4zM605 605h2v13h-2zM628 605h2v13h-2zM631 605h2v13h-2zM661 605h4v13h-4zM686 605h1v13h-1zM694 605h2v13h-2zM706 605h2v13h-2zM709 605h3v13h-3zM713 605h1v13h-1zM719 605h1v13h-1zM728 605h1v13h-1zM740 605h3v13h-3zM758 605h1v13h-1zM760 605h2v13h-2zM774 605h2v13h-2zM777 605h4v13h-4zM785 605h6v13h-6zM794 605h3v13h-3zM863 605h2v13h-2zM898 605h3v13h-3zM903 605h1v13h-1zM909 605h2v13h-2zM914 605h2v13h-2zM917 605h1v13h-1zM920 605h1v13h-1zM924 605h1v13h-1zM935 605h2v13h-2zM944 605h2v13h-2zM947 605h4v13h-4zM961 605h1v13h-1zM963 605h2v13h-2zM966 605h1v13h-1zM968 605h1v13h-1zM972 605h3v13h-3zM980 605h4v13h-4zM987 605h1v13h-1zM994 605h4v13h-4zM1018 605h1v13h-1zM1020 605h1v13h-1zM1023 605h1v13h-1zM1027 605h6v13h-6zM1036 605h1v13h-1zM1038 605h1v13h-1zM1047 605h3v13h-3zM1056 605h3v13h-3zM1063 605h2v13h-2zM1066 605h5v13h-5zM1074 605h1v13h-1zM1076 605h1v13h-1zM121 618h4v12h-4zM126 618h1v12h-1zM147 618h3v12h-3zM151 618h5v12h-5zM180 618h1v12h-1zM192 618h3v12h-3zM197 618h1v12h-1zM226 618h1v12h-1zM247 618h1v12h-1zM261 618h2v12h-2zM264 618h2v12h-2zM268 618h1v12h-1zM283 618h3v12h-3zM329 618h1v12h-1zM333 618h2v12h-2zM346 618h2v12h-2zM349 618h1v12h-1zM379 618h1v12h-1zM407 618h2v12h-2zM452 618h1v12h-1zM456 618h1v12h-1zM467 618h1v12h-1zM477 618h1v12h-1zM495 618h1v12h-1zM564 618h1v12h-1zM566 618h2v12h-2zM582 618h1v12h-1zM605 618h2v12h-2zM627 618h5v12h-5zM633 618h1v12h-1zM658 618h2v12h-2zM661 618h1v12h-1zM698 618h1v12h-1zM706 618h6v12h-6zM715 618h1v12h-1zM726 618h3v12h-3zM743 618h1v12h-1zM758 618h1v12h-1zM760 618h2v12h-2zM774 618h11v12h-11zM786 618h1v12h-1zM789 618h3v12h-3zM793 618h5v12h-5zM863 618h2v12h-2zM894 618h10v12h-10zM909 618h2v12h-2zM914 618h2v12h-2zM917 618h1v12h-1zM924 618h1v12h-1zM935 618h3v12h-3zM943 618h8v12h-8zM961 618h1v12h-1zM963 618h2v12h-2zM966 618h4v12h-4zM973 618h2v12h-2zM976 618h1v12h-1zM978 618h1v12h-1zM982 618h3v12h-3zM987 618h4v12h-4zM994 618h4v12h-4zM1017 618h2v12h-2zM1023 618h9v12h-9zM1033 618h1v12h-1zM1036 618h1v12h-1zM1038 618h2v12h-2zM1046 618h3v12h-3zM1057 618h8v12h-8zM1066 618h1v12h-1zM1068 618h1v12h-1zM1073 618h4v12h-4zM120 630h2v18h-2zM123 630h2v18h-2zM146 630h2v18h-2zM149 630h1v18h-1zM151 630h5v18h-5zM180 630h2v18h-2zM193 630h2v18h-2zM196 630h2v18h-2zM226 630h2v18h-2zM247 630h1v18h-1zM261 630h2v18h-2zM264 630h2v18h-2zM267 630h4v18h-4zM283 630h2v18h-2zM292 630h4v18h-4zM333 630h3v18h-3zM349 630h1v18h-1zM379 630h1v18h-1zM407 630h2v18h-2zM438 630h1v18h-1zM452 630h3v18h-3zM456 630h2v18h-2zM466 630h3v18h-3zM477 630h1v18h-1zM494 630h2v18h-2zM564 630h1v18h-1zM566 630h2v18h-2zM605 630h2v18h-2zM627 630h5v18h-5zM658 630h1v18h-1zM661 630h4v18h-4zM684 630h1v18h-1zM686 630h2v18h-2zM694 630h1v18h-1zM698 630h2v18h-2zM708 630h4v18h-4zM715 630h1v18h-1zM719 630h3v18h-3zM726 630h3v18h-3zM740 630h4v18h-4zM758 630h1v18h-1zM760 630h1v18h-1zM774 630h18v18h-18zM793 630h4v18h-4zM798 630h1v18h-1zM863 630h2v18h-2zM894 630h3v18h-3zM898 630h6v18h-6zM914 630h4v18h-4zM919 630h2v18h-2zM924 630h1v18h-1zM935 630h3v18h-3zM940 630h6v18h-6zM947 630h4v18h-4zM961 630h1v18h-1zM963 630h5v18h-5zM969 630h6v18h-6zM976 630h1v18h-1zM981 630h4v18h-4zM987 630h4v18h-4zM994 630h4v18h-4zM1017 630h4v18h-4zM1023 630h14v18h-14zM1038 630h1v18h-1zM1047 630h8v18h-8zM1056 630h3v18h-3zM1060 630h5v18h-5zM1066 630h1v18h-1zM1068 630h1v18h-1zM1073 630h4v18h-4zM121 648h1v17h-1zM123 648h4v17h-4zM146 648h2v17h-2zM149 648h1v17h-1zM151 648h5v17h-5zM179 648h2v17h-2zM194 648h1v17h-1zM226 648h1v17h-1zM247 648h1v17h-1zM249 648h2v17h-2zM261 648h2v17h-2zM264 648h2v17h-2zM268 648h1v17h-1zM270 648h2v17h-2zM294 648h2v17h-2zM333 648h3v17h-3zM349 648h2v17h-2zM379 648h1v17h-1zM407 648h1v17h-1zM438 648h1v17h-1zM454 648h1v17h-1zM467 648h2v17h-2zM494 648h2v17h-2zM564 648h1v17h-1zM566 648h2v17h-2zM569 648h1v17h-1zM605 648h2v17h-2zM627 648h3v17h-3zM658 648h1v17h-1zM661 648h4v17h-4zM694 648h1v17h-1zM698 648h2v17h-2zM706 648h5v17h-5zM720 648h2v17h-2zM726 648h3v17h-3zM740 648h2v17h-2zM758 648h1v17h-1zM760 648h2v17h-2zM774 648h2v17h-2zM777 648h4v17h-4zM782 648h4v17h-4zM789 648h3v17h-3zM793 648h5v17h-5zM863 648h2v17h-2zM895 648h2v17h-2zM898 648h6v17h-6zM914 648h1v17h-1zM917 648h1v17h-1zM920 648h1v17h-1zM924 648h1v17h-1zM935 648h3v17h-3zM940 648h11v17h-11zM961 648h1v17h-1zM963 648h2v17h-2zM966 648h10v17h-10zM977 648h1v17h-1zM979 648h1v17h-1zM983 648h1v17h-1zM986 648h5v17h-5zM992 648h6v17h-6zM1015 648h1v17h-1zM1017 648h2v17h-2zM1020 648h17v17h-17zM1038 648h1v17h-1zM1047 648h3v17h-3zM1054 648h1v17h-1zM1057 648h1v17h-1zM1059 648h6v17h-6zM1066 648h1v17h-1zM1068 648h1v17h-1zM1070 648h2v17h-2zM1073 648h2v17h-2zM1076 648h1v17h-1zM151 665h3v12h-3zM179 665h2v12h-2zM194 665h1v12h-1zM197 665h1v12h-1zM226 665h1v12h-1zM247 665h1v12h-1zM333 665h2v12h-2zM346 665h2v12h-2zM350 665h1v12h-1zM379 665h1v12h-1zM452 665h1v12h-1zM454 665h1v12h-1zM468 665h1v12h-1zM477 665h1v12h-1zM493 665h1v12h-1zM627 665h3v12h-3zM698 665h1v12h-1zM706 665h4v12h-4zM711 665h1v12h-1zM715 665h1v12h-1zM726 665h3v12h-3zM740 665h3v12h-3zM758 665h1v12h-1zM774 665h2v12h-2zM777 665h4v12h-4zM785 665h2v12h-2zM789 665h1v12h-1zM791 665h1v12h-1zM793 665h4v12h-4zM894 665h3v12h-3zM899 665h2v12h-2zM903 665h1v12h-1zM914 665h2v12h-2zM935 665h3v12h-3zM940 665h1v12h-1zM943 665h3v12h-3zM947 665h1v12h-1zM949 665h2v12h-2zM961 665h1v12h-1zM964 665h1v12h-1zM966 665h1v12h-1zM968 665h9v12h-9zM983 665h1v12h-1zM987 665h4v12h-4zM993 665h5v12h-5zM1017 665h2v12h-2zM1020 665h1v12h-1zM1023 665h2v12h-2zM1026 665h3v12h-3zM1031 665h6v12h-6zM1038 665h2v12h-2zM1047 665h8v12h-8zM1057 665h15v12h-15zM1073 665h2v12h-2zM1076 665h1v12h-1zM121 677h1v13h-1zM124 677h1v13h-1zM146 677h4v13h-4zM151 677h4v13h-4zM194 677h1v13h-1zM197 677h1v13h-1zM226 677h1v13h-1zM247 677h1v13h-1zM249 677h2v13h-2zM261 677h2v13h-2zM264 677h2v13h-2zM268 677h1v13h-1zM283 677h3v13h-3zM333 677h3v13h-3zM347 677h1v13h-1zM349 677h1v13h-1zM379 677h1v13h-1zM407 677h2v13h-2zM452 677h3v13h-3zM456 677h1v13h-1zM495 677h1v13h-1zM567 677h1v13h-1zM605 677h1v13h-1zM627 677h7v13h-7zM661 677h4v13h-4zM685 677h1v13h-1zM698 677h2v13h-2zM706 677h6v13h-6zM713 677h1v13h-1zM715 677h1v13h-1zM726 677h3v13h-3zM742 677h1v13h-1zM758 677h1v13h-1zM760 677h1v13h-1zM774 677h2v13h-2zM777 677h4v13h-4zM783 677h5v13h-5zM789 677h1v13h-1zM791 677h1v13h-1zM794 677h3v13h-3zM863 677h2v13h-2zM894 677h1v13h-1zM896 677h1v13h-1zM899 677h1v13h-1zM917 677h1v13h-1zM920 677h1v13h-1zM924 677h1v13h-1zM935 677h1v13h-1zM937 677h4v13h-4zM942 677h4v13h-4zM947 677h4v13h-4zM961 677h1v13h-1zM964 677h1v13h-1zM966 677h3v13h-3zM970 677h5v13h-5zM978 677h4v13h-4zM983 677h1v13h-1zM987 677h2v13h-2zM990 677h1v13h-1zM994 677h3v13h-3zM1017 677h2v13h-2zM1020 677h1v13h-1zM1022 677h7v13h-7zM1031 677h6v13h-6zM1038 677h2v13h-2zM1047 677h5v13h-5zM1057 677h12v13h-12zM1070 677h7v13h-7z" fill="url(#gw)"/><path d="M820 514h1v12h-1zM800 526h1v26h-1zM807 526h1v26h-1zM811 526h1v26h-1zM818 526h1v26h-1zM820 526h1v26h-1zM822 526h1v26h-1zM952 526h1v26h-1zM956 526h2v26h-2zM802 552h1v16h-1zM804 552h1v16h-1zM811 552h4v16h-4zM818 552h1v16h-1zM832 552h1v16h-1zM953 552h2v16h-2zM960 552h1v16h-1zM802 568h1v13h-1zM812 568h1v13h-1zM814 568h2v13h-2zM818 568h1v13h-1zM832 568h1v13h-1zM953 568h2v13h-2zM960 568h1v13h-1zM800 581h3v24h-3zM804 581h1v24h-1zM807 581h1v24h-1zM811 581h5v24h-5zM818 581h1v24h-1zM951 581h3v24h-3zM957 581h1v24h-1zM960 581h1v24h-1zM1041 581h1v24h-1zM1045 581h1v24h-1zM800 605h1v13h-1zM802 605h1v13h-1zM804 605h4v13h-4zM812 605h3v13h-3zM820 605h1v13h-1zM822 605h1v13h-1zM827 605h1v13h-1zM832 605h1v13h-1zM951 605h4v13h-4zM957 605h1v13h-1zM960 605h1v13h-1zM999 605h1v13h-1zM1045 605h1v13h-1zM1077 605h1v13h-1zM800 618h1v12h-1zM805 618h5v12h-5zM811 618h5v12h-5zM818 618h1v12h-1zM820 618h1v12h-1zM827 618h3v12h-3zM951 618h4v12h-4zM957 618h1v12h-1zM960 618h1v12h-1zM999 618h1v12h-1zM1040 618h1v12h-1zM1043 618h1v12h-1zM1045 618h1v12h-1zM799 630h4v18h-4zM804 630h1v18h-1zM807 630h16v18h-16zM825 630h5v18h-5zM832 630h1v18h-1zM951 630h4v18h-4zM957 630h1v18h-1zM959 630h2v18h-2zM1040 630h2v18h-2zM1045 630h1v18h-1zM1077 630h1v18h-1zM799 648h24v17h-24zM824 648h1v17h-1zM828 648h2v17h-2zM832 648h1v17h-1zM951 648h4v17h-4zM956 648h2v17h-2zM960 648h1v17h-1zM998 648h2v17h-2zM1041 648h1v17h-1zM1045 648h1v17h-1zM799 665h4v12h-4zM804 665h26v12h-26zM832 665h1v12h-1zM951 665h4v12h-4zM957 665h1v12h-1zM960 665h1v12h-1zM1040 665h2v12h-2zM1043 665h1v12h-1zM1045 665h1v12h-1zM800 677h1v13h-1zM802 677h1v13h-1zM804 677h1v13h-1zM807 677h9v13h-9zM818 677h3v13h-3zM822 677h1v13h-1zM824 677h2v13h-2zM827 677h3v13h-3zM832 677h1v13h-1zM951 677h4v13h-4zM956 677h2v13h-2zM959 677h2v13h-2zM1040 677h4v13h-4zM1045 677h1v13h-1z" fill="url(#gh)"/><rect x="91" y="686" width="4" height="1" fill="#333"/><rect x="91" y="680" width="4" height="1" fill="#333"/><rect x="91" y="675" width="4" height="1" fill="#333"/><rect x="91" y="671" width="4" height="1" fill="#333"/><rect x="91" y="667" width="4" height="1" fill="#333"/><rect x="91" y="664" width="4" height="1" fill="#333"/><rect x="91" y="661" width="4" height="1" fill="#333"/><rect x="87" y="659" width="8" height="1" fill="#333"/><rect x="91" y="643" width="4" height="1" fill="#333"/><rect x="91" y="634" width="4" height="1" fill="#333"/><rect x="91" y="627" width="4" height="1" fill="#333"/><rect x="91" y="622" width="4" height="1" fill="#333"/><rect x="91" y="618" width="4" height="1" fill="#333"/><rect x="91" y="615" width="4" height="1" fill="#333"/><rect x="91" y="612" width="4" height="1" fill="#333"/><rect x="91" y="609" width="4" height="1" fill="#333"/><rect x="87" y="606" width="8" height="1" fill="#333"/><rect x="91" y="591" width="4" height="1" fill="#333"/><rect x="91" y="581" width="4" height="1" fill="#333"/><rect x="91" y="575" width="4" height="1" fill="#333"/><rect x="91" y="570" width="4" height="1" fill="#333"/><rect x="91" y="566" width="4" height="1" fill="#333"/><rect x="91" y="562" width="4" height="1" fill="#333"/><rect x="91" y="559" width="4" height="1" fill="#333"/><rect x="91" y="556" width="4" height="1" fill="#333"/><rect x="87" y="554" width="8" height="1" fill="#333"/><rect x="91" y="538" width="4" height="1" fill="#333"/><rect x="91" y="529" width="4" height="1" fill="#333"/><rect x="91" y="522" width="4" height="1" fill="#333"/><rect x="91" y="517" width="4" height="1" fill="#333"/><text x="60.5" y="561.8" font-size="12.5" text-anchor="start" fill="#333" textLength="14" lengthAdjust="spacingAndGlyphs" xml:space="preserve">10</text><text x="75.5" y="555.8" font-size="11" text-anchor="start" fill="#333" textLength="6" lengthAdjust="spacingAndGlyphs" xml:space="preserve">4</text><text x="60.5" y="614.6" font-size="12.5" text-anchor="start" fill="#333" textLength="14" lengthAdjust="spacingAndGlyphs" xml:space="preserve">10</text><text x="75.5" y="608.6" font-size="11" text-anchor="start" fill="#333" textLength="6" lengthAdjust="spacingAndGlyphs" xml:space="preserve">3</text><text x="60.5" y="667.4" font-size="12.5" text-anchor="start" fill="#333" textLength="14" lengthAdjust="spacingAndGlyphs" xml:space="preserve">10</text><text x="75.5" y="661.4" font-size="11" text-anchor="start" fill="#333" textLength="6" lengthAdjust="spacingAndGlyphs" xml:space="preserve">2</text><text x="10" y="537" font-size="12.5" text-anchor="start" fill="#333" textLength="64" lengthAdjust="spacingAndGlyphs" xml:space="preserve">LEMMS Ions</text><text transform="translate(50,602.5) rotate(-90)" font-size="12.5" text-anchor="middle" fill="#333" textLength="71.7" lengthAdjust="spacingAndGlyphs">Energy (keV)</text><rect x="1092" y="515" width="12" height="177" fill="url(#cmap)"/><rect x="1104" y="515" width="1" height="177" fill="#333"/><rect x="1104" y="691" width="4" height="1" fill="#333"/><rect x="1104" y="672" width="8" height="1" fill="#333"/><rect x="1104" y="652" width="4" height="1" fill="#333"/><rect x="1104" y="633" width="8" height="1" fill="#333"/><rect x="1104" y="613" width="4" height="1" fill="#333"/><rect x="1104" y="593" width="8" height="1" fill="#333"/><rect x="1104" y="574" width="4" height="1" fill="#333"/><rect x="1104" y="554" width="8" height="1" fill="#333"/><rect x="1104" y="535" width="4" height="1" fill="#333"/><rect x="1104" y="515" width="8" height="1" fill="#333"/><text x="1118" y="522.5" font-size="12.5" text-anchor="start" fill="#333" textLength="13" lengthAdjust="spacingAndGlyphs" xml:space="preserve">10</text><text x="1132" y="516.5" font-size="11.5" text-anchor="start" fill="#333" textLength="6" lengthAdjust="spacingAndGlyphs" xml:space="preserve">4</text><text x="1118" y="561.7" font-size="12.5" text-anchor="start" fill="#333" textLength="13" lengthAdjust="spacingAndGlyphs" xml:space="preserve">10</text><text x="1132" y="555.7" font-size="11.5" text-anchor="start" fill="#333" textLength="6" lengthAdjust="spacingAndGlyphs" xml:space="preserve">2</text><text x="1118" y="600.9" font-size="12.5" text-anchor="start" fill="#333" textLength="13" lengthAdjust="spacingAndGlyphs" xml:space="preserve">10</text><text x="1132" y="594.9" font-size="11.5" text-anchor="start" fill="#333" textLength="6" lengthAdjust="spacingAndGlyphs" xml:space="preserve">0</text><text x="1118" y="640.1" font-size="12.5" text-anchor="start" fill="#333" textLength="13" lengthAdjust="spacingAndGlyphs" xml:space="preserve">10</text><text x="1132" y="634.1" font-size="11.5" text-anchor="start" fill="#333" textLength="14" lengthAdjust="spacingAndGlyphs" xml:space="preserve">−2</text><text x="1118" y="679.3" font-size="12.5" text-anchor="start" fill="#333" textLength="13" lengthAdjust="spacingAndGlyphs" xml:space="preserve">10</text><text x="1132" y="673.3" font-size="11.5" text-anchor="start" fill="#333" textLength="14" lengthAdjust="spacingAndGlyphs" xml:space="preserve">−4</text><text transform="translate(1156.2,602) rotate(90)" font-size="12.5" text-anchor="middle" fill="#333" textLength="166" lengthAdjust="spacingAndGlyphs">intensity 1/(s cm^2 ster keV)</text><rect x="95.5" y="695.5" width="985" height="15" fill="#00ff00" stroke="#333" stroke-width="1"/><rect x="96" y="696" width="1" height="14" fill="#000"/><rect x="797.5" y="695.5" width="20" height="15" fill="#ff0000" stroke="#222" stroke-width="1"/><rect x="941.5" y="695.5" width="7" height="15" fill="#ff0000" stroke="#222" stroke-width="1"/><text x="79.5" y="706.7" font-size="12.5" text-anchor="end" fill="#333" textLength="49.5" lengthAdjust="spacingAndGlyphs" xml:space="preserve">Sunlight?</text><rect x="136" y="711" width="1" height="4" fill="#333"/><rect x="177" y="711" width="1" height="4" fill="#333"/><rect x="218" y="711" width="1" height="8" fill="#333"/><rect x="259" y="711" width="1" height="4" fill="#333"/><rect x="300" y="711" width="1" height="4" fill="#333"/><rect x="341" y="711" width="1" height="8" fill="#333"/><rect x="382" y="711" width="1" height="4" fill="#333"/><rect x="423" y="711" width="1" height="4" fill="#333"/><rect x="464" y="711" width="1" height="8" fill="#333"/><rect x="505" y="711" width="1" height="4" fill="#333"/><rect x="546" y="711" width="1" height="4" fill="#333"/><rect x="587" y="711" width="1" height="8" fill="#333"/><rect x="628" y="711" width="1" height="4" fill="#333"/><rect x="669" y="711" width="1" height="4" fill="#333"/><rect x="710" y="711" width="1" height="8" fill="#333"/><rect x="751" y="711" width="1" height="4" fill="#333"/><rect x="792" y="711" width="1" height="4" fill="#333"/><rect x="833" y="711" width="1" height="8" fill="#333"/><rect x="874" y="711" width="1" height="4" fill="#333"/><rect x="915" y="711" width="1" height="4" fill="#333"/><rect x="956" y="711" width="1" height="8" fill="#333"/><rect x="997" y="711" width="1" height="4" fill="#333"/><rect x="1038" y="711" width="1" height="4" fill="#333"/><rect x="1080" y="711" width="1" height="8" fill="#333"/><text x="218.17000000000002" y="733.7" font-size="12" text-anchor="middle" fill="#333" textLength="34.5" lengthAdjust="spacingAndGlyphs" xml:space="preserve">03:00</text><text x="218.17000000000002" y="748.8" font-size="12" text-anchor="middle" fill="#333" textLength="34" lengthAdjust="spacingAndGlyphs" xml:space="preserve">13.14</text><text x="218.17000000000002" y="763.8" font-size="12" text-anchor="middle" fill="#333" textLength="34" lengthAdjust="spacingAndGlyphs" xml:space="preserve">35.97</text><text x="218.17000000000002" y="778.8" font-size="12" text-anchor="middle" fill="#333" textLength="34" lengthAdjust="spacingAndGlyphs" xml:space="preserve">36.22</text><text x="341.29" y="733.7" font-size="12" text-anchor="middle" fill="#333" textLength="34.5" lengthAdjust="spacingAndGlyphs" xml:space="preserve">06:00</text><text x="341.29" y="748.8" font-size="12" text-anchor="middle" fill="#333" textLength="34" lengthAdjust="spacingAndGlyphs" xml:space="preserve">13.17</text><text x="341.29" y="763.8" font-size="12" text-anchor="middle" fill="#333" textLength="34" lengthAdjust="spacingAndGlyphs" xml:space="preserve">36.47</text><text x="341.29" y="778.8" font-size="12" text-anchor="middle" fill="#333" textLength="34" lengthAdjust="spacingAndGlyphs" xml:space="preserve">36.69</text><text x="464.41" y="733.7" font-size="12" text-anchor="middle" fill="#333" textLength="34.5" lengthAdjust="spacingAndGlyphs" xml:space="preserve">09:00</text><text x="464.41" y="748.8" font-size="12" text-anchor="middle" fill="#333" textLength="34" lengthAdjust="spacingAndGlyphs" xml:space="preserve">13.20</text><text x="464.41" y="763.8" font-size="12" text-anchor="middle" fill="#333" textLength="34" lengthAdjust="spacingAndGlyphs" xml:space="preserve">36.95</text><text x="464.41" y="778.8" font-size="12" text-anchor="middle" fill="#333" textLength="34" lengthAdjust="spacingAndGlyphs" xml:space="preserve">37.16</text><text x="587.53" y="733.7" font-size="12" text-anchor="middle" fill="#333" textLength="34.5" lengthAdjust="spacingAndGlyphs" xml:space="preserve">12:00</text><text x="587.53" y="748.8" font-size="12" text-anchor="middle" fill="#333" textLength="34" lengthAdjust="spacingAndGlyphs" xml:space="preserve">13.23</text><text x="587.53" y="763.8" font-size="12" text-anchor="middle" fill="#333" textLength="34" lengthAdjust="spacingAndGlyphs" xml:space="preserve">37.42</text><text x="587.53" y="778.8" font-size="12" text-anchor="middle" fill="#333" textLength="34" lengthAdjust="spacingAndGlyphs" xml:space="preserve">37.62</text><text x="710.65" y="733.7" font-size="12" text-anchor="middle" fill="#333" textLength="34.5" lengthAdjust="spacingAndGlyphs" xml:space="preserve">15:00</text><text x="710.65" y="748.8" font-size="12" text-anchor="middle" fill="#333" textLength="34" lengthAdjust="spacingAndGlyphs" xml:space="preserve">13.26</text><text x="710.65" y="763.8" font-size="12" text-anchor="middle" fill="#333" textLength="34" lengthAdjust="spacingAndGlyphs" xml:space="preserve">37.88</text><text x="710.65" y="778.8" font-size="12" text-anchor="middle" fill="#333" textLength="34" lengthAdjust="spacingAndGlyphs" xml:space="preserve">38.06</text><text x="833.77" y="733.7" font-size="12" text-anchor="middle" fill="#333" textLength="34.5" lengthAdjust="spacingAndGlyphs" xml:space="preserve">18:00</text><text x="833.77" y="748.8" font-size="12" text-anchor="middle" fill="#333" textLength="34" lengthAdjust="spacingAndGlyphs" xml:space="preserve">13.29</text><text x="833.77" y="763.8" font-size="12" text-anchor="middle" fill="#333" textLength="34" lengthAdjust="spacingAndGlyphs" xml:space="preserve">38.33</text><text x="833.77" y="778.8" font-size="12" text-anchor="middle" fill="#333" textLength="34" lengthAdjust="spacingAndGlyphs" xml:space="preserve">38.49</text><text x="956.89" y="733.7" font-size="12" text-anchor="middle" fill="#333" textLength="34.5" lengthAdjust="spacingAndGlyphs" xml:space="preserve">21:00</text><text x="956.89" y="748.8" font-size="12" text-anchor="middle" fill="#333" textLength="34" lengthAdjust="spacingAndGlyphs" xml:space="preserve">13.32</text><text x="956.89" y="763.8" font-size="12" text-anchor="middle" fill="#333" textLength="34" lengthAdjust="spacingAndGlyphs" xml:space="preserve">38.76</text><text x="956.89" y="778.8" font-size="12" text-anchor="middle" fill="#333" textLength="34" lengthAdjust="spacingAndGlyphs" xml:space="preserve">38.92</text><text x="1080.01" y="733.7" font-size="12" text-anchor="middle" fill="#333" textLength="34.5" lengthAdjust="spacingAndGlyphs" xml:space="preserve">00:00</text><text x="1080.01" y="748.8" font-size="12" text-anchor="middle" fill="#333" textLength="34" lengthAdjust="spacingAndGlyphs" xml:space="preserve">13.35</text><text x="1080.01" y="763.8" font-size="12" text-anchor="middle" fill="#333" textLength="34" lengthAdjust="spacingAndGlyphs" xml:space="preserve">39.19</text><text x="1080.01" y="778.8" font-size="12" text-anchor="middle" fill="#333" textLength="34" lengthAdjust="spacingAndGlyphs" xml:space="preserve">39.33</text><text x="59.5" y="749.2" font-size="12.5" text-anchor="end" fill="#333" textLength="43" lengthAdjust="spacingAndGlyphs" xml:space="preserve">LT (hrs)</text><text x="59.5" y="763.3" font-size="12.5" text-anchor="end" fill="#333" textLength="13" lengthAdjust="spacingAndGlyphs" xml:space="preserve">Rs</text><text x="60" y="778.7" font-size="12.5" text-anchor="end" fill="#333" textLength="46.7" lengthAdjust="spacingAndGlyphs" xml:space="preserve">Dipole L</text><rect x="215.5" y="802.5" width="151" height="148" fill="#fff" stroke="#333" stroke-width="1"/><rect x="207" y="802" width="8" height="1" fill="#333"/><rect x="211" y="804" width="4" height="1" fill="#333"/><rect x="211" y="806" width="4" height="1" fill="#333"/><rect x="211" y="808" width="4" height="1" fill="#333"/><rect x="211" y="809" width="4" height="1" fill="#333"/><rect x="211" y="811" width="4" height="1" fill="#333"/><rect x="211" y="813" width="4" height="1" fill="#333"/><rect x="211" y="815" width="4" height="1" fill="#333"/><rect x="211" y="817" width="4" height="1" fill="#333"/><rect x="211" y="819" width="4" height="1" fill="#333"/><rect x="207" y="821" width="8" height="1" fill="#333"/><rect x="211" y="822" width="4" height="1" fill="#333"/><rect x="211" y="824" width="4" height="1" fill="#333"/><rect x="211" y="826" width="4" height="1" fill="#333"/><rect x="211" y="828" width="4" height="1" fill="#333"/><rect x="211" y="830" width="4" height="1" fill="#333"/><rect x="211" y="832" width="4" height="1" fill="#333"/><rect x="211" y="833" width="4" height="1" fill="#333"/><rect x="211" y="835" width="4" height="1" fill="#333"/><rect x="211" y="837" width="4" height="1" fill="#333"/><rect x="207" y="839" width="8" height="1" fill="#333"/><rect x="211" y="841" width="4" height="1" fill="#333"/><rect x="211" y="843" width="4" height="1" fill="#333"/><rect x="211" y="845" width="4" height="1" fill="#333"/><rect x="211" y="846" width="4" height="1" fill="#333"/><rect x="211" y="848" width="4" height="1" fill="#333"/><rect x="211" y="850" width="4" height="1" fill="#333"/><rect x="211" y="852" width="4" height="1" fill="#333"/><rect x="211" y="854" width="4" height="1" fill="#333"/><rect x="211" y="856" width="4" height="1" fill="#333"/><rect x="207" y="858" width="8" height="1" fill="#333"/><rect x="211" y="859" width="4" height="1" fill="#333"/><rect x="211" y="861" width="4" height="1" fill="#333"/><rect x="211" y="863" width="4" height="1" fill="#333"/><rect x="211" y="865" width="4" height="1" fill="#333"/><rect x="211" y="867" width="4" height="1" fill="#333"/><rect x="211" y="869" width="4" height="1" fill="#333"/><rect x="211" y="870" width="4" height="1" fill="#333"/><rect x="211" y="872" width="4" height="1" fill="#333"/><rect x="211" y="874" width="4" height="1" fill="#333"/><rect x="207" y="876" width="8" height="1" fill="#333"/><rect x="211" y="878" width="4" height="1" fill="#333"/><rect x="211" y="880" width="4" height="1" fill="#333"/><rect x="211" y="882" width="4" height="1" fill="#333"/><rect x="211" y="883" width="4" height="1" fill="#333"/><rect x="211" y="885" width="4" height="1" fill="#333"/><rect x="211" y="887" width="4" height="1" fill="#333"/><rect x="211" y="889" width="4" height="1" fill="#333"/><rect x="211" y="891" width="4" height="1" fill="#333"/><rect x="211" y="893" width="4" height="1" fill="#333"/><rect x="207" y="895" width="8" height="1" fill="#333"/><rect x="211" y="896" width="4" height="1" fill="#333"/><rect x="211" y="898" width="4" height="1" fill="#333"/><rect x="211" y="900" width="4" height="1" fill="#333"/><rect x="211" y="902" width="4" height="1" fill="#333"/><rect x="211" y="904" width="4" height="1" fill="#333"/><rect x="211" y="906" width="4" height="1" fill="#333"/><rect x="211" y="907" width="4" height="1" fill="#333"/><rect x="211" y="909" width="4" height="1" fill="#333"/><rect x="211" y="911" width="4" height="1" fill="#333"/><rect x="207" y="913" width="8" height="1" fill="#333"/><rect x="211" y="915" width="4" height="1" fill="#333"/><rect x="211" y="917" width="4" height="1" fill="#333"/><rect x="211" y="919" width="4" height="1" fill="#333"/><rect x="211" y="920" width="4" height="1" fill="#333"/><rect x="211" y="922" width="4" height="1" fill="#333"/><rect x="211" y="924" width="4" height="1" fill="#333"/><rect x="211" y="926" width="4" height="1" fill="#333"/><rect x="211" y="928" width="4" height="1" fill="#333"/><rect x="211" y="930" width="4" height="1" fill="#333"/><rect x="207" y="932" width="8" height="1" fill="#333"/><rect x="211" y="933" width="4" height="1" fill="#333"/><rect x="211" y="935" width="4" height="1" fill="#333"/><rect x="211" y="937" width="4" height="1" fill="#333"/><rect x="211" y="939" width="4" height="1" fill="#333"/><rect x="211" y="941" width="4" height="1" fill="#333"/><rect x="211" y="943" width="4" height="1" fill="#333"/><rect x="211" y="944" width="4" height="1" fill="#333"/><rect x="211" y="946" width="4" height="1" fill="#333"/><rect x="211" y="948" width="4" height="1" fill="#333"/><rect x="207" y="950" width="8" height="1" fill="#333"/><text x="201" y="807.0" font-size="12" text-anchor="end" fill="#333" textLength="24.9" lengthAdjust="spacingAndGlyphs" xml:space="preserve">−40.</text><text x="201" y="825.5" font-size="12" text-anchor="end" fill="#333" textLength="24.9" lengthAdjust="spacingAndGlyphs" xml:space="preserve">−30.</text><text x="201" y="844.0" font-size="12" text-anchor="end" fill="#333" textLength="24.9" lengthAdjust="spacingAndGlyphs" xml:space="preserve">−20.</text><text x="201" y="862.5" font-size="12" text-anchor="end" fill="#333" textLength="24.9" lengthAdjust="spacingAndGlyphs" xml:space="preserve">−10.</text><text x="201" y="881.0" font-size="12" text-anchor="end" fill="#333" textLength="10.4" lengthAdjust="spacingAndGlyphs" xml:space="preserve">0.</text><text x="201" y="899.5" font-size="12" text-anchor="end" fill="#333" textLength="17.7" lengthAdjust="spacingAndGlyphs" xml:space="preserve">10.</text><text x="201" y="918.0" font-size="12" text-anchor="end" fill="#333" textLength="17.7" lengthAdjust="spacingAndGlyphs" xml:space="preserve">20.</text><text x="201" y="936.5" font-size="12" text-anchor="end" fill="#333" textLength="17.7" lengthAdjust="spacingAndGlyphs" xml:space="preserve">30.</text><text x="201" y="955.0" font-size="12" text-anchor="end" fill="#333" textLength="17.7" lengthAdjust="spacingAndGlyphs" xml:space="preserve">40.</text><rect x="215" y="951" width="1" height="8" fill="#333"/><rect x="234" y="951" width="1" height="4" fill="#333"/><rect x="253" y="951" width="1" height="8" fill="#333"/><rect x="272" y="951" width="1" height="4" fill="#333"/><rect x="291" y="951" width="1" height="8" fill="#333"/><rect x="309" y="951" width="1" height="4" fill="#333"/><rect x="328" y="951" width="1" height="8" fill="#333"/><rect x="347" y="951" width="1" height="4" fill="#333"/><rect x="366" y="951" width="1" height="8" fill="#333"/><text x="215.5" y="973.75" font-size="12" text-anchor="middle" fill="#333" textLength="17.7" lengthAdjust="spacingAndGlyphs" xml:space="preserve">40.</text><text x="253.25" y="973.75" font-size="12" text-anchor="middle" fill="#333" textLength="17.7" lengthAdjust="spacingAndGlyphs" xml:space="preserve">20.</text><text x="291.0" y="973.75" font-size="12" text-anchor="middle" fill="#333" textLength="10.4" lengthAdjust="spacingAndGlyphs" xml:space="preserve">0.</text><text x="328.75" y="973.75" font-size="12" text-anchor="middle" fill="#333" textLength="24.9" lengthAdjust="spacingAndGlyphs" xml:space="preserve">−20.</text><text x="366.5" y="973.75" font-size="12" text-anchor="middle" fill="#333" textLength="24.9" lengthAdjust="spacingAndGlyphs" xml:space="preserve">−40.</text><text x="290.5" y="991.7" font-size="12.5" text-anchor="middle" fill="#333" textLength="38" lengthAdjust="spacingAndGlyphs" xml:space="preserve">KSM−X</text><text transform="translate(167,876.5) rotate(-90)" font-size="12.5" text-anchor="middle" fill="#333" textLength="38" lengthAdjust="spacingAndGlyphs">KSM−Y</text><g transform="translate(215,802)"><clipPath id="clip215"><rect x="1" y="1" width="150" height="147"/></clipPath><g clip-path="url(#clip215)"><path d="M34.86 -2.00 L32.46 1.80 L30.18 5.60 L28.03 9.40 L26.00 13.20 L24.09 17.00 L22.30 20.80 L20.63 24.60 L19.09 28.40 L17.67 32.20 L16.37 36.00 L15.19 39.80 L14.14 43.60 L13.21 47.40 L12.40 51.20 L11.71 55.00 L11.14 58.80 L10.70 62.60 L10.38 66.40 L10.18 70.20 L10.10 74.00 L10.15 77.80 L10.31 81.60 L10.60 85.40 L11.01 89.20 L11.55 93.00 L12.20 96.80 L12.98 100.60 L13.88 104.40 L14.90 108.20 L16.05 112.00 L17.32 115.80 L18.70 119.60 L20.21 123.40 L21.85 127.20 L23.60 131.00 L25.48 134.80 L27.48 138.60 L29.60 142.40 L31.85 146.20 L34.21 150.00" fill="none" stroke="#0000ff" stroke-width="1.1" stroke-dasharray="2 1.3"/><path d="M71.09 -2.00 L66.84 1.80 L62.80 5.60 L58.99 9.40 L55.38 13.20 L52.00 17.00 L48.83 20.80 L45.88 24.60 L43.14 28.40 L40.62 32.20 L38.32 36.00 L36.23 39.80 L34.36 43.60 L32.71 47.40 L31.27 51.20 L30.05 55.00 L29.05 58.80 L28.26 62.60 L27.69 66.40 L27.34 70.20 L27.20 74.00 L27.28 77.80 L27.58 81.60 L28.09 85.40 L28.82 89.20 L29.77 93.00 L30.93 96.80 L32.31 100.60 L33.91 104.40 L35.72 108.20 L37.75 112.00 L39.99 115.80 L42.46 119.60 L45.13 123.40 L48.03 127.20 L51.14 131.00 L54.47 134.80 L58.02 138.60 L61.78 142.40 L65.76 146.20 L69.95 150.00" fill="none" stroke="#7a4010" stroke-width="1.1" stroke-dasharray="2 1.3"/><circle cx="77.5" cy="74.5" r="37.3" fill="none" stroke="#000" stroke-width="1.3"/><ellipse cx="76.8" cy="74.5" rx="1.8" ry="1.2" fill="none" stroke="#000" stroke-width="0.9"/><path d="M-1.00 107.90 L1.30 104.28 L3.59 100.88 L5.89 97.70 L8.19 94.72 L10.48 91.94 L12.78 89.34 L15.08 86.93 L17.37 84.69 L19.67 82.61 L21.97 80.69 L24.26 78.91 L26.56 77.28 L28.86 75.77 L31.15 74.39 L33.45 73.12 L35.74 71.95 L38.04 70.89 L40.34 69.91 L42.63 69.01 L44.93 68.19 L47.23 67.43 L49.52 66.72 L51.82 66.07 L54.12 65.45 L56.41 64.86 L58.71 64.30 L61.01 63.75 L63.30 63.21 L65.60 62.66" fill="none" stroke="#000" stroke-width="1.3"/><path d="M6 96 L15.6 87.9" stroke="#0000ff" stroke-width="3.6" stroke-linecap="round"/><path d="M8 84 L17 93 M8 93 L17 84" stroke="#ff2020" stroke-width="1.1"/><circle cx="64.1" cy="109.5" r="2.4" fill="#ff0000"/></g></g><rect x="509.5" y="802.5" width="151" height="148" fill="#fff" stroke="#333" stroke-width="1"/><rect x="501" y="802" width="8" height="1" fill="#333"/><rect x="505" y="804" width="4" height="1" fill="#333"/><rect x="505" y="806" width="4" height="1" fill="#333"/><rect x="505" y="808" width="4" height="1" fill="#333"/><rect x="505" y="809" width="4" height="1" fill="#333"/><rect x="505" y="811" width="4" height="1" fill="#333"/><rect x="505" y="813" width="4" height="1" fill="#333"/><rect x="505" y="815" width="4" height="1" fill="#333"/><rect x="505" y="817" width="4" height="1" fill="#333"/><rect x="505" y="819" width="4" height="1" fill="#333"/><rect x="501" y="821" width="8" height="1" fill="#333"/><rect x="505" y="822" width="4" height="1" fill="#333"/><rect x="505" y="824" width="4" height="1" fill="#333"/><rect x="505" y="826" width="4" height="1" fill="#333"/><rect x="505" y="828" width="4" height="1" fill="#333"/><rect x="505" y="830" width="4" height="1" fill="#333"/><rect x="505" y="832" width="4" height="1" fill="#333"/><rect x="505" y="833" width="4" height="1" fill="#333"/><rect x="505" y="835" width="4" height="1" fill="#333"/><rect x="505" y="837" width="4" height="1" fill="#333"/><rect x="501" y="839" width="8" height="1" fill="#333"/><rect x="505" y="841" width="4" height="1" fill="#333"/><rect x="505" y="843" width="4" height="1" fill="#333"/><rect x="505" y="845" width="4" height="1" fill="#333"/><rect x="505" y="846" width="4" height="1" fill="#333"/><rect x="505" y="848" width="4" height="1" fill="#333"/><rect x="505" y="850" width="4" height="1" fill="#333"/><rect x="505" y="852" width="4" height="1" fill="#333"/><rect x="505" y="854" width="4" height="1" fill="#333"/><rect x="505" y="856" width="4" height="1" fill="#333"/><rect x="501" y="858" width="8" height="1" fill="#333"/><rect x="505" y="859" width="4" height="1" fill="#333"/><rect x="505" y="861" width="4" height="1" fill="#333"/><rect x="505" y="863" width="4" height="1" fill="#333"/><rect x="505" y="865" width="4" height="1" fill="#333"/><rect x="505" y="867" width="4" height="1" fill="#333"/><rect x="505" y="869" width="4" height="1" fill="#333"/><rect x="505" y="870" width="4" height="1" fill="#333"/><rect x="505" y="872" width="4" height="1" fill="#333"/><rect x="505" y="874" width="4" height="1" fill="#333"/><rect x="501" y="876" width="8" height="1" fill="#333"/><rect x="505" y="878" width="4" height="1" fill="#333"/><rect x="505" y="880" width="4" height="1" fill="#333"/><rect x="505" y="882" width="4" height="1" fill="#333"/><rect x="505" y="883" width="4" height="1" fill="#333"/><rect x="505" y="885" width="4" height="1" fill="#333"/><rect x="505" y="887" width="4" height="1" fill="#333"/><rect x="505" y="889" width="4" height="1" fill="#333"/><rect x="505" y="891" width="4" height="1" fill="#333"/><rect x="505" y="893" width="4" height="1" fill="#333"/><rect x="501" y="895" width="8" height="1" fill="#333"/><rect x="505" y="896" width="4" height="1" fill="#333"/><rect x="505" y="898" width="4" height="1" fill="#333"/><rect x="505" y="900" width="4" height="1" fill="#333"/><rect x="505" y="902" width="4" height="1" fill="#333"/><rect x="505" y="904" width="4" height="1" fill="#333"/><rect x="505" y="906" width="4" height="1" fill="#333"/><rect x="505" y="907" width="4" height="1" fill="#333"/><rect x="505" y="909" width="4" height="1" fill="#333"/><rect x="505" y="911" width="4" height="1" fill="#333"/><rect x="501" y="913" width="8" height="1" fill="#333"/><rect x="505" y="915" width="4" height="1" fill="#333"/><rect x="505" y="917" width="4" height="1" fill="#333"/><rect x="505" y="919" width="4" height="1" fill="#333"/><rect x="505" y="920" width="4" height="1" fill="#333"/><rect x="505" y="922" width="4" height="1" fill="#333"/><rect x="505" y="924" width="4" height="1" fill="#333"/><rect x="505" y="926" width="4" height="1" fill="#333"/><rect x="505" y="928" width="4" height="1" fill="#333"/><rect x="505" y="930" width="4" height="1" fill="#333"/><rect x="501" y="932" width="8" height="1" fill="#333"/><rect x="505" y="933" width="4" height="1" fill="#333"/><rect x="505" y="935" width="4" height="1" fill="#333"/><rect x="505" y="937" width="4" height="1" fill="#333"/><rect x="505" y="939" width="4" height="1" fill="#333"/><rect x="505" y="941" width="4" height="1" fill="#333"/><rect x="505" y="943" width="4" height="1" fill="#333"/><rect x="505" y="944" width="4" height="1" fill="#333"/><rect x="505" y="946" width="4" height="1" fill="#333"/><rect x="505" y="948" width="4" height="1" fill="#333"/><rect x="501" y="950" width="8" height="1" fill="#333"/><text x="495" y="807.0" font-size="12" text-anchor="end" fill="#333" textLength="17.7" lengthAdjust="spacingAndGlyphs" xml:space="preserve">40.</text><text x="495" y="825.5" font-size="12" text-anchor="end" fill="#333" textLength="17.7" lengthAdjust="spacingAndGlyphs" xml:space="preserve">30.</text><text x="495" y="844.0" font-size="12" text-anchor="end" fill="#333" textLength="17.7" lengthAdjust="spacingAndGlyphs" xml:space="preserve">20.</text><text x="495" y="862.5" font-size="12" text-anchor="end" fill="#333" textLength="17.7" lengthAdjust="spacingAndGlyphs" xml:space="preserve">10.</text><text x="495" y="881.0" font-size="12" text-anchor="end" fill="#333" textLength="10.4" lengthAdjust="spacingAndGlyphs" xml:space="preserve">0.</text><text x="495" y="899.5" font-size="12" text-anchor="end" fill="#333" textLength="24.9" lengthAdjust="spacingAndGlyphs" xml:space="preserve">−10.</text><text x="495" y="918.0" font-size="12" text-anchor="end" fill="#333" textLength="24.9" lengthAdjust="spacingAndGlyphs" xml:space="preserve">−20.</text><text x="495" y="936.5" font-size="12" text-anchor="end" fill="#333" textLength="24.9" lengthAdjust="spacingAndGlyphs" xml:space="preserve">−30.</text><text x="495" y="955.0" font-size="12" text-anchor="end" fill="#333" textLength="24.9" lengthAdjust="spacingAndGlyphs" xml:space="preserve">−40.</text><rect x="509" y="951" width="1" height="8" fill="#333"/><rect x="528" y="951" width="1" height="4" fill="#333"/><rect x="547" y="951" width="1" height="8" fill="#333"/><rect x="566" y="951" width="1" height="4" fill="#333"/><rect x="585" y="951" width="1" height="8" fill="#333"/><rect x="603" y="951" width="1" height="4" fill="#333"/><rect x="622" y="951" width="1" height="8" fill="#333"/><rect x="641" y="951" width="1" height="4" fill="#333"/><rect x="660" y="951" width="1" height="8" fill="#333"/><text x="509.5" y="973.75" font-size="12" text-anchor="middle" fill="#333" textLength="17.7" lengthAdjust="spacingAndGlyphs" xml:space="preserve">40.</text><text x="547.25" y="973.75" font-size="12" text-anchor="middle" fill="#333" textLength="17.7" lengthAdjust="spacingAndGlyphs" xml:space="preserve">20.</text><text x="585.0" y="973.75" font-size="12" text-anchor="middle" fill="#333" textLength="10.4" lengthAdjust="spacingAndGlyphs" xml:space="preserve">0.</text><text x="622.75" y="973.75" font-size="12" text-anchor="middle" fill="#333" textLength="24.9" lengthAdjust="spacingAndGlyphs" xml:space="preserve">−20.</text><text x="660.5" y="973.75" font-size="12" text-anchor="middle" fill="#333" textLength="24.9" lengthAdjust="spacingAndGlyphs" xml:space="preserve">−40.</text><text x="584.5" y="991.7" font-size="12.5" text-anchor="middle" fill="#333" textLength="38" lengthAdjust="spacingAndGlyphs" xml:space="preserve">KSM−X</text><text transform="translate(461,876.5) rotate(-90)" font-size="12.5" text-anchor="middle" fill="#333" textLength="38" lengthAdjust="spacingAndGlyphs">KSM−Z</text><g transform="translate(509,802)"><clipPath id="clip509"><rect x="1" y="1" width="150" height="147"/></clipPath><g clip-path="url(#clip509)"><path d="M34.86 -2.00 L32.46 1.80 L30.18 5.60 L28.03 9.40 L26.00 13.20 L24.09 17.00 L22.30 20.80 L20.63 24.60 L19.09 28.40 L17.67 32.20 L16.37 36.00 L15.19 39.80 L14.14 43.60 L13.21 47.40 L12.40 51.20 L11.71 55.00 L11.14 58.80 L10.70 62.60 L10.38 66.40 L10.18 70.20 L10.10 74.00 L10.15 77.80 L10.31 81.60 L10.60 85.40 L11.01 89.20 L11.55 93.00 L12.20 96.80 L12.98 100.60 L13.88 104.40 L14.90 108.20 L16.05 112.00 L17.32 115.80 L18.70 119.60 L20.21 123.40 L21.85 127.20 L23.60 131.00 L25.48 134.80 L27.48 138.60 L29.60 142.40 L31.85 146.20 L34.21 150.00" fill="none" stroke="#0000ff" stroke-width="1.1" stroke-dasharray="2 1.3"/><path d="M71.09 -2.00 L66.84 1.80 L62.80 5.60 L58.99 9.40 L55.38 13.20 L52.00 17.00 L48.83 20.80 L45.88 24.60 L43.14 28.40 L40.62 32.20 L38.32 36.00 L36.23 39.80 L34.36 43.60 L32.71 47.40 L31.27 51.20 L30.05 55.00 L29.05 58.80 L28.26 62.60 L27.69 66.40 L27.34 70.20 L27.20 74.00 L27.28 77.80 L27.58 81.60 L28.09 85.40 L28.82 89.20 L29.77 93.00 L30.93 96.80 L32.31 100.60 L33.91 104.40 L35.72 108.20 L37.75 112.00 L39.99 115.80 L42.46 119.60 L45.13 123.40 L48.03 127.20 L51.14 131.00 L54.47 134.80 L58.02 138.60 L61.78 142.40 L65.76 146.20 L69.95 150.00" fill="none" stroke="#7a4010" stroke-width="1.1" stroke-dasharray="2 1.3"/><path d="M0 58.1 L20 63.5 L40 67.5 L60 71.5 L80 75.5 L100 79 L115.5 81.2" fill="none" stroke="#000" stroke-width="1.5"/><path d="M30 65.7 L110 80" stroke="#000" stroke-width="2"/><rect x="74.5" y="73.5" width="3" height="3" fill="none" stroke="#555" stroke-width="0.8"/><circle cx="6.5" cy="60.3" r="2.9" fill="#0000ff"/><path d="M7 60.5 L13 61.2" stroke="#0000ff" stroke-width="3.4" stroke-linecap="round"/><path d="M8 56.6 L16.5 65.6 M8 65.6 L16.5 56.6" stroke="#ff2020" stroke-width="1.1"/><circle cx="64.1" cy="72.7" r="2.3" fill="#ff0000"/></g></g><rect x="803.5" y="802.5" width="151" height="148" fill="#fff" stroke="#333" stroke-width="1"/><rect x="795" y="802" width="8" height="1" fill="#333"/><rect x="799" y="804" width="4" height="1" fill="#333"/><rect x="799" y="806" width="4" height="1" fill="#333"/><rect x="799" y="808" width="4" height="1" fill="#333"/><rect x="799" y="809" width="4" height="1" fill="#333"/><rect x="799" y="811" width="4" height="1" fill="#333"/><rect x="799" y="813" width="4" height="1" fill="#333"/><rect x="799" y="815" width="4" height="1" fill="#333"/><rect x="799" y="817" width="4" height="1" fill="#333"/><rect x="799" y="819" width="4" height="1" fill="#333"/><rect x="795" y="821" width="8" height="1" fill="#333"/><rect x="799" y="822" width="4" height="1" fill="#333"/><rect x="799" y="824" width="4" height="1" fill="#333"/><rect x="799" y="826" width="4" height="1" fill="#333"/><rect x="799" y="828" width="4" height="1" fill="#333"/><rect x="799" y="830" width="4" height="1" fill="#333"/><rect x="799" y="832" width="4" height="1" fill="#333"/><rect x="799" y="833" width="4" height="1" fill="#333"/><rect x="799" y="835" width="4" height="1" fill="#333"/><rect x="799" y="837" width="4" height="1" fill="#333"/><rect x="795" y="839" width="8" height="1" fill="#333"/><rect x="799" y="841" width="4" height="1" fill="#333"/><rect x="799" y="843" width="4" height="1" fill="#333"/><rect x="799" y="845" width="4" height="1" fill="#333"/><rect x="799" y="846" width="4" height="1" fill="#333"/><rect x="799" y="848" width="4" height="1" fill="#333"/><rect x="799" y="850" width="4" height="1" fill="#333"/><rect x="799" y="852" width="4" height="1" fill="#333"/><rect x="799" y="854" width="4" height="1" fill="#333"/><rect x="799" y="856" width="4" height="1" fill="#333"/><rect x="795" y="858" width="8" height="1" fill="#333"/><rect x="799" y="859" width="4" height="1" fill="#333"/><rect x="799" y="861" width="4" height="1" fill="#333"/><rect x="799" y="863" width="4" height="1" fill="#333"/><rect x="799" y="865" width="4" height="1" fill="#333"/><rect x="799" y="867" width="4" height="1" fill="#333"/><rect x="799" y="869" width="4" height="1" fill="#333"/><rect x="799" y="870" width="4" height="1" fill="#333"/><rect x="799" y="872" width="4" height="1" fill="#333"/><rect x="799" y="874" width="4" height="1" fill="#333"/><rect x="795" y="876" width="8" height="1" fill="#333"/><rect x="799" y="878" width="4" height="1" fill="#333"/><rect x="799" y="880" width="4" height="1" fill="#333"/><rect x="799" y="882" width="4" height="1" fill="#333"/><rect x="799" y="883" width="4" height="1" fill="#333"/><rect x="799" y="885" width="4" height="1" fill="#333"/><rect x="799" y="887" width="4" height="1" fill="#333"/><rect x="799" y="889" width="4" height="1" fill="#333"/><rect x="799" y="891" width="4" height="1" fill="#333"/><rect x="799" y="893" width="4" height="1" fill="#333"/><rect x="795" y="895" width="8" height="1" fill="#333"/><rect x="799" y="896" width="4" height="1" fill="#333"/><rect x="799" y="898" width="4" height="1" fill="#333"/><rect x="799" y="900" width="4" height="1" fill="#333"/><rect x="799" y="902" width="4" height="1" fill="#333"/><rect x="799" y="904" width="4" height="1" fill="#333"/><rect x="799" y="906" width="4" height="1" fill="#333"/><rect x="799" y="907" width="4" height="1" fill="#333"/><rect x="799" y="909" width="4" height="1" fill="#333"/><rect x="799" y="911" width="4" height="1" fill="#333"/><rect x="795" y="913" width="8" height="1" fill="#333"/><rect x="799" y="915" width="4" height="1" fill="#333"/><rect x="799" y="917" width="4" height="1" fill="#333"/><rect x="799" y="919" width="4" height="1" fill="#333"/><rect x="799" y="920" width="4" height="1" fill="#333"/><rect x="799" y="922" width="4" height="1" fill="#333"/><rect x="799" y="924" width="4" height="1" fill="#333"/><rect x="799" y="926" width="4" height="1" fill="#333"/><rect x="799" y="928" width="4" height="1" fill="#333"/><rect x="799" y="930" width="4" height="1" fill="#333"/><rect x="795" y="932" width="8" height="1" fill="#333"/><rect x="799" y="933" width="4" height="1" fill="#333"/><rect x="799" y="935" width="4" height="1" fill="#333"/><rect x="799" y="937" width="4" height="1" fill="#333"/><rect x="799" y="939" width="4" height="1" fill="#333"/><rect x="799" y="941" width="4" height="1" fill="#333"/><rect x="799" y="943" width="4" height="1" fill="#333"/><rect x="799" y="944" width="4" height="1" fill="#333"/><rect x="799" y="946" width="4" height="1" fill="#333"/><rect x="799" y="948" width="4" height="1" fill="#333"/><rect x="795" y="950" width="8" height="1" fill="#333"/><text x="789" y="807.0" font-size="12" text-anchor="end" fill="#333" textLength="17.7" lengthAdjust="spacingAndGlyphs" xml:space="preserve">40.</text><text x="789" y="825.5" font-size="12" text-anchor="end" fill="#333" textLength="17.7" lengthAdjust="spacingAndGlyphs" xml:space="preserve">30.</text><text x="789" y="844.0" font-size="12" text-anchor="end" fill="#333" textLength="17.7" lengthAdjust="spacingAndGlyphs" xml:space="preserve">20.</text><text x="789" y="862.5" font-size="12" text-anchor="end" fill="#333" textLength="17.7" lengthAdjust="spacingAndGlyphs" xml:space="preserve">10.</text><text x="789" y="881.0" font-size="12" text-anchor="end" fill="#333" textLength="10.4" lengthAdjust="spacingAndGlyphs" xml:space="preserve">0.</text><text x="789" y="899.5" font-size="12" text-anchor="end" fill="#333" textLength="24.9" lengthAdjust="spacingAndGlyphs" xml:space="preserve">−10.</text><text x="789" y="918.0" font-size="12" text-anchor="end" fill="#333" textLength="24.9" lengthAdjust="spacingAndGlyphs" xml:space="preserve">−20.</text><text x="789" y="936.5" font-size="12" text-anchor="end" fill="#333" textLength="24.9" lengthAdjust="spacingAndGlyphs" xml:space="preserve">−30.</text><text x="789" y="955.0" font-size="12" text-anchor="end" fill="#333" textLength="24.9" lengthAdjust="spacingAndGlyphs" xml:space="preserve">−40.</text><rect x="803" y="951" width="1" height="8" fill="#333"/><rect x="822" y="951" width="1" height="4" fill="#333"/><rect x="841" y="951" width="1" height="8" fill="#333"/><rect x="860" y="951" width="1" height="4" fill="#333"/><rect x="879" y="951" width="1" height="8" fill="#333"/><rect x="897" y="951" width="1" height="4" fill="#333"/><rect x="916" y="951" width="1" height="8" fill="#333"/><rect x="935" y="951" width="1" height="4" fill="#333"/><rect x="954" y="951" width="1" height="8" fill="#333"/><text x="803.5" y="973.75" font-size="12" text-anchor="middle" fill="#333" textLength="24.9" lengthAdjust="spacingAndGlyphs" xml:space="preserve">−40.</text><text x="841.25" y="973.75" font-size="12" text-anchor="middle" fill="#333" textLength="24.9" lengthAdjust="spacingAndGlyphs" xml:space="preserve">−20.</text><text x="879.0" y="973.75" font-size="12" text-anchor="middle" fill="#333" textLength="10.4" lengthAdjust="spacingAndGlyphs" xml:space="preserve">0.</text><text x="916.75" y="973.75" font-size="12" text-anchor="middle" fill="#333" textLength="17.7" lengthAdjust="spacingAndGlyphs" xml:space="preserve">20.</text><text x="954.5" y="973.75" font-size="12" text-anchor="middle" fill="#333" textLength="17.7" lengthAdjust="spacingAndGlyphs" xml:space="preserve">40.</text><text x="878.5" y="991.7" font-size="12.5" text-anchor="middle" fill="#333" textLength="38" lengthAdjust="spacingAndGlyphs" xml:space="preserve">KSM−Y</text><text transform="translate(755,876.5) rotate(-90)" font-size="12.5" text-anchor="middle" fill="#333" textLength="38" lengthAdjust="spacingAndGlyphs">KSM−Z</text><g transform="translate(803,802)"><clipPath id="clip803"><rect x="1" y="1" width="150" height="147"/></clipPath><g clip-path="url(#clip803)"><ellipse cx="76.4" cy="75" rx="38.4" ry="6.7" fill="none" stroke="#000" stroke-width="1.3"/><path d="M64.1 72.7 L72 69 L89.4 63.3 L105 59 L119.2 57.1" fill="none" stroke="#000" stroke-width="1.2"/><path d="M90.5 62.6 L98 60.2" stroke="#0000ff" stroke-width="4.4" stroke-linecap="round"/><path d="M86 56.6 L94.5 65.6 M86 65.6 L94.5 56.6" stroke="#ff2020" stroke-width="1.1"/><circle cx="111.8" cy="72.6" r="2.2" fill="#ff0000"/><rect x="74.5" y="73" width="3" height="3" fill="none" stroke="#7a4010" stroke-width="0.8"/></g></g></svg>
</body></html>
